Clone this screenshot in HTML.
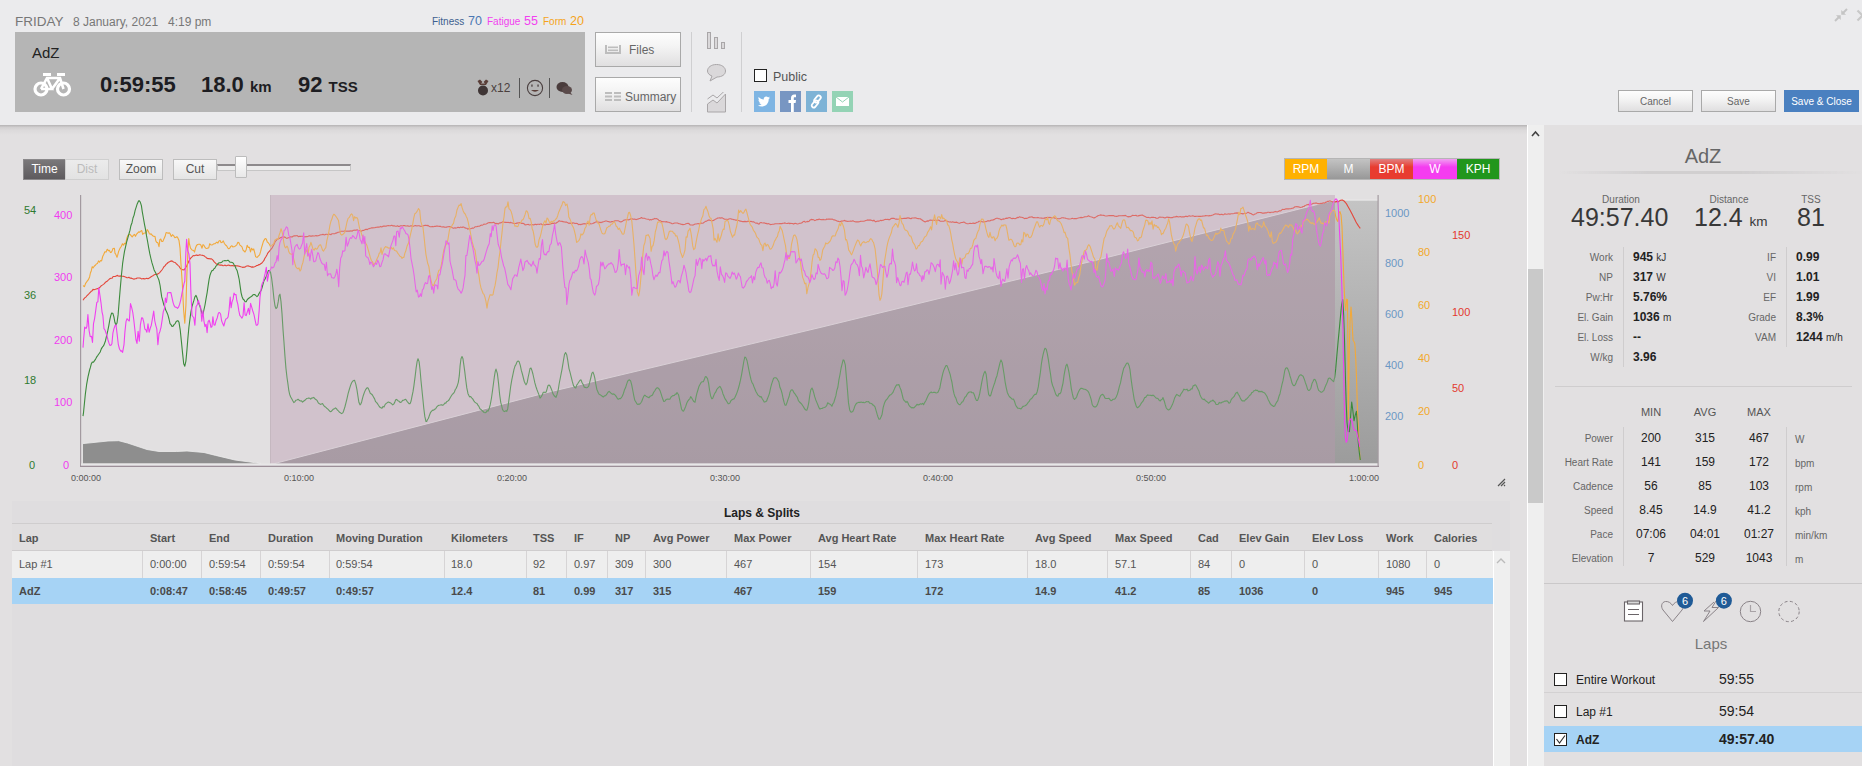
<!DOCTYPE html>
<html><head><meta charset="utf-8">
<style>
*{margin:0;padding:0;box-sizing:border-box}
html,body{width:1862px;height:766px;overflow:hidden}
body{background:#e2e0e1;font-family:"Liberation Sans",sans-serif;position:relative;color:#333}
.a{position:absolute;white-space:nowrap}
#hdr{position:absolute;left:0;top:0;width:1862px;height:125px;background:#ebebed}
#hdrsh{position:absolute;left:0;top:125px;width:1862px;height:10px;background:linear-gradient(#b5b3b4,#d2d0d1 25%,#dcdadb 55%,#e2e0e1)}
.btn{position:absolute;border:1px solid #a9a9a9;background:linear-gradient(#fdfdfd,#f4f4f4 40%,#e0dfe0);color:#666;font-size:12px;text-align:center}
.tb{position:absolute;border:1px solid #bdbdbd;background:linear-gradient(#f8f8f8,#e4e4e4);color:#555;font-size:12px;text-align:center;height:21px;line-height:19px}
.lbl{font-size:11px}
.ax{position:absolute;font-size:11px;white-space:nowrap}
.th{position:absolute;font-size:11px;font-weight:bold;color:#555;white-space:nowrap}
.td{position:absolute;font-size:11px;color:#555;white-space:nowrap}
.tdb{position:absolute;font-size:11px;color:#4a4a4a;font-weight:bold;white-space:nowrap}
.sl{position:absolute;font-size:10px;color:#666;text-align:right;white-space:nowrap}
.sv{position:absolute;font-size:12px;color:#222;font-weight:bold;white-space:nowrap}
.sv span{font-size:10px;font-weight:normal;color:#333}
.mv{position:absolute;font-size:12px;color:#222;text-align:center;width:40px;white-space:nowrap}
</style></head><body>

<div id="hdr"></div>
<div id="hdrsh"></div>

<!-- date line -->
<div class="a" style="left:15px;top:14px;font-size:13.5px;color:#777">FRIDAY</div>
<div class="a" style="left:73px;top:15px;font-size:12px;color:#777">8 January, 2021</div>
<div class="a" style="left:168px;top:15px;font-size:12px;color:#777">4:19 pm</div>
<div class="a" style="left:432px;top:16px;font-size:10px;color:#3d5f8f">Fitness</div><div class="a" style="left:468px;top:14px;font-size:12.5px;color:#4b77b3">70</div>
<div class="a" style="left:487px;top:16px;font-size:10px;color:#f23ff0">Fatigue</div><div class="a" style="left:524px;top:14px;font-size:12.5px;color:#f23ff0">55</div>
<div class="a" style="left:543px;top:16px;font-size:10px;color:#f5a31a">Form</div><div class="a" style="left:570px;top:14px;font-size:12.5px;color:#f5a31a">20</div>

<!-- gray workout box -->
<div class="a" style="left:15px;top:32px;width:570px;height:80px;background:#b5b5b5"></div>
<div class="a" style="left:32px;top:44px;font-size:15px;color:#222">AdZ</div>
<svg class="a" style="left:33px;top:72px" width="39" height="25" viewBox="0 0 39 25">
<g fill="none" stroke="#fff" stroke-width="3.2">
<circle cx="8" cy="17" r="6"/><circle cx="30.5" cy="17" r="6"/>
<path d="M8 17 L14 6 L27 6 L30.5 17 M14 6 L19 17 L8 17 M19 17 L27 6" stroke-width="2.6"/>
</g>
<rect x="10" y="1" width="8" height="3" fill="#fff"/><rect x="24" y="1" width="8" height="3" fill="#fff"/>
</svg>
<div class="a" style="left:100px;top:72px;font-size:22px;font-weight:bold;color:#1d1d22">0:59:55</div>
<div class="a" style="left:201px;top:72px;font-size:22px;font-weight:bold;color:#1d1d22">18.0 <span style="font-size:15px">km</span></div>
<div class="a" style="left:298px;top:72px;font-size:22px;font-weight:bold;color:#1d1d22">92 <span style="font-size:15px">TSS</span></div>
<svg class="a" style="left:477px;top:79px" width="12" height="18" viewBox="0 0 12 18"><path d="M0.5 2 L3 0.5 L6 3.5 L9 0.5 L11.5 2 L9 6 L3 6Z" fill="#5a3e38"/><path d="M4 4.5 L6 2.5 L8 4.5" fill="#b5b5b5"/><circle cx="6" cy="11.5" r="5" fill="#3f3535"/></svg>
<div class="a" style="left:491px;top:81px;font-size:12px;color:#4a3f3d">x12</div>
<div class="a" style="left:519px;top:78px;width:1px;height:20px;background:#555"></div>
<svg class="a" style="left:526px;top:79px" width="18" height="18" viewBox="0 0 18 18"><circle cx="9" cy="9" r="7.6" fill="none" stroke="#4a3f3f" stroke-width="1.1"/><rect x="5.3" y="5.5" width="1.3" height="2.2" fill="#4a3f3f"/><rect x="11.4" y="5.5" width="1.3" height="2.2" fill="#4a3f3f"/><path d="M5 11 Q9 14.5 13 11Z" fill="#5a3e38"/></svg>
<div class="a" style="left:549px;top:78px;width:1px;height:20px;background:#555"></div>
<svg class="a" style="left:556px;top:81px" width="17" height="15" viewBox="0 0 17 15"><ellipse cx="6.5" cy="6" rx="6" ry="5" fill="#4a3c3c"/><ellipse cx="11" cy="9" rx="5" ry="4" fill="#5a4a4a"/><path d="M14 11 L16.5 14 L12 12.5Z" fill="#5a4a4a"/></svg>

<!-- Files / Summary -->
<div class="btn" style="left:595px;top:32px;width:86px;height:35px;line-height:33px"><span style="position:absolute;left:33px;top:1px">Files</span></div>
<svg class="a" style="left:605px;top:45px" width="16" height="9" viewBox="0 0 16 9"><path d="M1 0 V8 H15 V0" fill="none" stroke="#bdbdbd" stroke-width="2"/><rect x="3" y="1.5" width="10" height="1.6" fill="#bdbdbd"/><rect x="3" y="4.5" width="10" height="1.6" fill="#bdbdbd"/></svg>
<div class="btn" style="left:595px;top:77px;width:86px;height:35px;line-height:33px"><span style="position:absolute;left:29px;top:3px">Summary</span></div>
<svg class="a" style="left:605px;top:92px" width="16" height="9" viewBox="0 0 16 9"><g fill="#bdbdbd"><rect x="0" y="0" width="7" height="2"/><rect x="9" y="0" width="7" height="2"/><rect x="0" y="3.5" width="7" height="2"/><rect x="9" y="3.5" width="7" height="2"/><rect x="0" y="7" width="7" height="2"/><rect x="9" y="7" width="7" height="2"/></g></svg>
<div class="a" style="left:691px;top:32px;width:1px;height:80px;background:#cfcfd1"></div>
<div class="a" style="left:741px;top:32px;width:1px;height:80px;background:#cfcfd1"></div>
<svg class="a" style="left:706px;top:31px" width="21" height="19" viewBox="0 0 21 19"><g fill="#dad8da" stroke="#a9a6a8" stroke-width="1"><rect x="1.5" y="1.5" width="3" height="16"/><rect x="8.5" y="6.5" width="3" height="11"/><rect x="15.5" y="11.5" width="3" height="6"/></g></svg>
<svg class="a" style="left:706px;top:63px" width="21" height="19" viewBox="0 0 21 19"><path d="M10.5 1.5 C16 1.5 19.5 4.5 19.5 8 C19.5 11.5 16 14 11 14 L4 18 L6 13 C3 12 1.5 10 1.5 8 C1.5 4.5 5 1.5 10.5 1.5Z" fill="#dad8da" stroke="#a9a6a8"/></svg>
<svg class="a" style="left:706px;top:92px" width="21" height="21" viewBox="0 0 21 21"><path d="M1.5 20 V12 L7 8 L11 11 L19.5 2 V20 Z" fill="#dad8da" stroke="#a9a6a8"/><path d="M1.5 7 L7 3 L11 6 L19.5 -2" fill="none" stroke="#a9a6a8"/></svg>

<!-- public -->
<div class="a" style="left:754px;top:69px;width:13px;height:13px;border:1.5px solid #222;background:#fff"></div>
<div class="a" style="left:773px;top:70px;font-size:12.5px;color:#555">Public</div>
<div class="a" style="left:754px;top:91px;width:21px;height:21px;background:#7fb5e3"></div>
<svg class="a" style="left:754px;top:91px" width="21" height="21" viewBox="0 0 21 21"><path d="M16 6.5 C15.5 6.8 15 6.9 14.5 7 C15 6.6 15.4 6.2 15.6 5.6 C15.1 5.9 14.6 6.1 14 6.2 C13.5 5.7 12.9 5.4 12.2 5.4 C10.8 5.4 9.7 6.5 9.7 7.9 C9.7 8.1 9.7 8.3 9.8 8.5 C7.7 8.4 5.9 7.4 4.7 5.9 C4.5 6.3 4.4 6.7 4.4 7.2 C4.4 8.1 4.8 8.8 5.5 9.3 C5.1 9.3 4.7 9.2 4.4 9 C4.4 10.2 5.3 11.2 6.4 11.4 C6 11.6 5.5 11.6 5.2 11.5 C5.5 12.5 6.5 13.2 7.6 13.3 C6.7 14 5.6 14.4 4.4 14.4 C4.2 14.4 4 14.4 3.8 14.4 C4.9 15.1 6.3 15.5 7.7 15.5 C12.2 15.5 14.7 11.7 14.7 8.4 V8.1 C15.2 7.7 15.6 7.2 16 6.5Z" fill="#fff"/></svg>
<div class="a" style="left:780px;top:91px;width:21px;height:21px;background:#7896c2"></div>
<svg class="a" style="left:780px;top:91px" width="21" height="21" viewBox="0 0 21 21"><path d="M11 21 V12 H8.5 V9 H11 V7 C11 4.8 12.3 3.5 14.3 3.5 C15 3.5 15.7 3.6 16 3.6 V6.3 H14.6 C13.8 6.3 13.8 6.8 13.8 7.3 V9 H16 L15.6 12 H13.8 V21Z" fill="#fff"/></svg>
<div class="a" style="left:806px;top:91px;width:21px;height:21px;background:#7eb3d6"></div>
<svg class="a" style="left:806px;top:91px" width="21" height="21" viewBox="0 0 21 21"><g fill="none" stroke="#fff" stroke-width="1.8"><rect x="9.5" y="4" width="4" height="8" rx="2" transform="rotate(40 11.5 8)"/><rect x="7" y="9" width="4" height="8" rx="2" transform="rotate(40 9 13)"/></g></svg>
<div class="a" style="left:832px;top:91px;width:21px;height:21px;background:#94d3b5"></div>
<svg class="a" style="left:832px;top:91px" width="21" height="21" viewBox="0 0 21 21"><rect x="4" y="6" width="13" height="9" fill="#fff"/><path d="M4 6 L10.5 11 L17 6" fill="none" stroke="#94d3b5" stroke-width="1"/></svg>

<!-- right top -->
<svg class="a" style="left:1834px;top:8px" width="14" height="14" viewBox="0 0 14 14"><g stroke="#c4c4c4" stroke-width="2" fill="#c4c4c4"><path d="M1 13 L5.5 8.5"/><path d="M13 1 L8.5 5.5"/><path d="M2.5 7.5 H6.5 V11.5Z" stroke-width="0.5"/><path d="M7.5 2.5 V6.5 H11.5Z" stroke-width="0.5"/></g></svg>
<svg class="a" style="left:1856px;top:9px" width="12" height="13" viewBox="0 0 12 13"><path d="M1.5 1.5 L11.5 11.5 M11.5 1.5 L1.5 11.5" stroke="#c8c8c8" stroke-width="2.2" fill="none"/></svg>
<div class="btn" style="left:1618px;top:90px;width:75px;height:22px;line-height:21px;font-size:10px">Cancel</div>
<div class="btn" style="left:1701px;top:90px;width:75px;height:22px;line-height:21px;font-size:10px">Save</div>
<div class="a" style="left:1784px;top:90px;width:75px;height:22px;line-height:23px;font-size:10px;background:#4a80c0;color:#fff;text-align:center">Save &amp; Close</div>

<!-- chart toolbar -->
<div class="tb" style="left:23px;top:159px;width:43px;background:linear-gradient(#7a787a,#5e5b5e);color:#fff;border-color:#8a888a">Time</div>
<div class="tb" style="left:65px;top:159px;width:44px;color:#bbb;background:linear-gradient(#ececec,#e2e2e2);border-color:#cfcfcf">Dist</div>
<div class="tb" style="left:119px;top:159px;width:44px">Zoom</div>
<div class="tb" style="left:173px;top:159px;width:44px">Cut</div>
<div class="a" style="left:217px;top:164px;width:134px;height:7px;border:1px solid #c6c6c6;border-top:2px solid #8d8a8c;background:#ececec"></div>
<div class="a" style="left:235px;top:156px;width:12px;height:22px;border:1px solid #bcbcbc;background:linear-gradient(#fff,#e8e8e8);border-radius:1px"></div>

<!-- legend -->
<div class="a" style="left:1284px;top:158px;width:216px;height:22px;border:1px solid #b5b5b5"></div>
<div class="a" style="left:1285px;top:159px;width:42px;height:20px;background:#ffb100;color:#fff;font-size:12px;text-align:center;line-height:20px">RPM</div>
<div class="a" style="left:1327px;top:159px;width:43px;height:20px;background:linear-gradient(#c3c3c3,#989898);color:#fff;font-size:12px;text-align:center;line-height:20px">M</div>
<div class="a" style="left:1370px;top:159px;width:43px;height:20px;background:linear-gradient(#e08080,#e83c30 40%);color:#fff;font-size:12px;text-align:center;line-height:20px">BPM</div>
<div class="a" style="left:1413px;top:159px;width:44px;height:20px;background:linear-gradient(#f0a0f0,#f53cf0 40%);color:#fff;font-size:12px;text-align:center;line-height:20px">W</div>
<div class="a" style="left:1457px;top:159px;width:42px;height:20px;background:#21961c;color:#fff;font-size:12px;text-align:center;line-height:20px">KPH</div>

<svg width="1862" height="766" style="position:absolute;left:0;top:0">
<defs>
<linearGradient id="grayR" x1="0" y1="0" x2="0" y2="1"><stop offset="0" stop-color="#c4c4c4"/><stop offset="1" stop-color="#9c9c9c"/></linearGradient>
<linearGradient id="tri" x1="0" y1="0" x2="0" y2="1"><stop offset="0" stop-color="#a898a2"/><stop offset="1" stop-color="#978a93"/></linearGradient>
</defs>
<rect x="270" y="195" width="1065" height="268.5" fill="#d1c2cc"/><rect x="270" y="195" width="1" height="268.5" fill="#c0b3bb"/>
<rect x="1335" y="200" width="43" height="263.5" fill="url(#grayR)"/><rect x="1335" y="199.5" width="43" height="1.2" fill="#e9e8e9"/>
<path d="M83 463.5 L83 443.6 L108 441 L118.7 440.7 L127.5 443 L147 449.5 L159 451.5 L176.5 451.5 L187 451 L204 452.5 L215.6 455.4 L235 460 L260.7 463.5 Z" fill="#8e8e8e"/><path d="M83 443.6 L108 441 L118.7 440.7 L127.5 443 L147 449.5 L159 451.5 L176.5 451.5 L187 451 L204 452.5 L215.6 455.4 L235 460 L260.7 463.5" fill="none" stroke="#eeeeee" stroke-width="0.8"/>
<path d="M274.6 463.5 L545 393 L820 327.5 L1095 260.5 L1335 200 L1335 463.5 Z" fill="url(#tri)"/>
<path d="M274.6 463.5 L545 393 L820 327.5 L1095 260.5 L1335 200" stroke="#ddd5da" stroke-width="1" fill="none"/>
<g fill="none" stroke-width="1.1" stroke-linejoin="round">
<path d="M83.0 300.2L83.7 299.2L84.7 297.9L85.8 297.1L87.1 295.5L88.4 294.3L89.6 293.0L90.5 292.2L91.3 291.2L92.2 290.7L93.0 289.4L94.1 289.7L95.4 289.3L97.0 288.7L97.7 288.5L98.6 288.6L99.4 287.5L100.3 287.0L101.3 285.7L102.3 285.1L103.4 284.4L104.4 283.6L105.5 282.2L106.6 281.6L107.7 280.7L108.8 279.7L109.9 278.6L111.0 278.3L112.1 278.2L113.1 276.5L114.1 276.5L115.0 276.4L116.1 276.2L117.1 275.3L118.1 276.0L119.1 276.1L120.1 276.1L121.1 275.9L122.0 276.3L123.0 276.3L123.9 276.4L124.9 276.8L125.9 277.1L126.9 277.7L127.9 277.8L128.9 277.3L130.0 278.1L130.9 278.1L131.9 278.4L132.9 278.8L133.9 279.2L135.0 278.7L136.0 278.7L137.1 278.0L138.2 278.0L139.2 278.0L140.3 278.1L141.4 278.9L142.4 278.8L143.4 278.6L144.4 278.9L145.4 278.7L146.3 278.4L147.2 278.4L148.0 278.7L149.3 278.1L150.4 277.2L151.5 276.6L152.4 275.9L153.4 275.4L154.3 274.7L155.1 274.5L156.0 274.3L157.0 274.5L158.0 273.8L159.0 273.2L159.9 272.3L160.9 271.2L161.9 270.0L162.9 268.5L163.9 266.8L165.0 265.9L166.0 264.4L167.1 263.5L168.1 262.5L169.1 261.9L170.1 261.4L171.1 261.1L172.0 260.9L173.1 261.7L174.1 262.3L175.2 262.5L176.2 263.7L177.2 264.5L178.2 265.6L179.2 266.4L180.2 268.2L181.1 269.1L182.1 269.6L183.0 269.7L184.1 269.9L185.0 268.7L185.9 267.3L186.8 265.8L187.7 263.8L188.6 261.8L189.6 259.8L190.7 258.1L192.0 256.8L192.8 255.9L193.7 255.6L194.6 255.7L195.6 255.3L196.6 254.9L197.6 255.4L198.7 255.2L199.7 254.7L200.8 255.0L201.9 255.2L202.9 255.4L204.0 255.8L205.0 256.6L206.0 257.3L207.0 258.3L208.0 258.6L209.1 258.5L210.1 258.9L211.2 258.8L212.2 259.4L213.2 260.4L214.2 261.9L215.3 262.9L216.3 264.0L217.2 264.5L218.2 264.5L219.2 265.0L220.1 265.1L221.0 265.0L222.1 265.1L223.1 265.8L224.1 265.5L225.1 265.1L226.0 265.7L226.9 265.6L227.8 265.2L228.8 265.0L229.8 265.6L230.9 265.7L232.0 265.5L232.9 265.6L233.8 266.0L234.8 265.7L235.7 265.5L236.7 266.0L237.7 265.8L238.8 266.3L239.8 266.4L240.8 266.8L241.9 267.0L242.9 267.5L244.0 267.0L245.0 267.2L246.0 266.3L247.0 266.0L248.1 265.9L249.1 266.2L250.2 266.6L251.3 267.1L252.4 266.9L253.5 267.1L254.6 266.7L255.6 266.2L256.7 265.5L257.7 265.5L258.7 264.6L259.7 264.6L260.7 263.8L261.6 263.3L262.7 262.0L263.8 260.7L264.9 258.3L265.9 256.7L266.9 254.9L267.8 253.1L268.8 251.9L269.7 250.8L270.7 249.7L271.6 248.7L272.6 246.9L273.5 245.2L274.3 243.7L274.9 242.2L275.5 241.1L276.2 240.6L277.0 239.5L277.9 239.1L279.2 238.5L280.9 237.6L283.0 236.8L283.7 237.2L284.4 236.9L285.1 237.3L285.9 237.9L286.7 238.4L287.5 238.0L288.4 237.7L289.3 237.7L290.2 236.9L291.1 236.9L292.1 237.0L293.1 236.2L294.1 235.8L295.1 235.9L296.1 235.7L297.2 235.6L298.3 236.6L299.4 236.3L300.4 236.4L301.5 236.2L302.7 236.3L303.8 236.6L304.9 237.0L306.0 236.5L307.1 236.7L308.2 236.3L309.4 235.8L310.5 236.1L311.6 236.1L312.7 235.9L313.8 236.0L314.8 236.0L315.9 235.6L317.0 235.9L318.0 235.8L319.0 235.4L320.0 235.0L321.0 234.7L322.0 234.8L323.0 234.2L324.0 234.9L325.0 234.8L326.0 234.3L327.0 234.3L328.0 234.8L329.0 234.1L330.0 234.2L331.0 234.7L332.0 233.7L333.0 233.8L334.0 233.7L335.0 233.6L336.0 233.1L337.0 232.9L338.0 232.2L339.0 232.1L340.0 231.8L341.0 231.3L342.0 231.3L343.0 231.3L344.0 231.2L345.0 230.8L346.0 231.2L347.0 231.0L348.0 231.3L349.0 231.0L350.0 231.1L351.0 230.8L352.0 231.3L353.0 230.4L354.0 230.3L355.0 230.1L356.0 230.2L357.0 229.8L358.0 230.3L358.9 230.6L359.9 230.8L360.8 230.9L361.7 231.1L362.7 230.4L363.6 230.5L364.5 229.9L365.5 229.4L366.4 229.4L367.3 229.6L368.2 228.8L369.1 228.7L370.1 228.3L371.0 228.1L371.9 227.7L372.9 227.9L373.8 227.7L374.8 227.7L375.7 227.4L376.7 227.2L377.7 227.1L378.7 227.1L379.7 227.0L380.7 226.4L381.7 226.9L382.7 226.4L383.8 226.1L384.9 226.0L386.0 226.3L387.1 225.7L388.2 225.6L389.4 225.8L390.6 225.6L391.8 225.3L393.0 225.9L393.9 225.8L394.7 225.9L395.6 226.2L396.6 226.2L397.5 225.7L398.5 226.5L399.5 226.4L400.5 225.8L401.5 225.8L402.5 226.0L403.5 225.6L404.6 225.5L405.7 226.0L406.7 226.0L407.8 225.9L408.9 226.2L410.0 226.1L411.1 225.7L412.3 226.1L413.4 226.2L414.5 225.8L415.6 225.6L416.8 226.0L417.9 225.7L419.0 225.8L420.2 226.1L421.3 226.3L422.4 226.2L423.5 225.8L424.7 225.4L425.8 225.2L426.9 225.6L428.0 225.4L429.1 226.3L430.2 226.8L431.2 226.8L432.3 226.4L433.3 226.8L434.4 226.4L435.4 226.4L436.4 226.0L437.4 226.1L438.4 226.2L439.3 226.4L440.3 226.3L441.2 226.8L442.1 227.0L443.0 226.7L443.8 226.9L444.6 227.1L445.4 227.2L446.2 227.0L447.0 227.1L447.7 226.8L449.4 226.6L450.9 227.0L452.3 227.8L453.6 228.2L454.9 227.8L456.0 228.1L457.0 227.7L458.0 227.2L458.9 227.6L459.7 227.6L460.5 227.1L461.3 227.2L462.1 227.5L462.8 227.0L463.6 227.0L464.3 227.5L465.1 227.9L465.9 228.1L466.8 228.2L467.7 229.1L468.7 228.8L469.7 228.8L470.6 228.7L471.5 228.4L472.4 227.9L473.3 228.2L474.2 227.6L475.0 226.8L475.8 226.7L476.7 226.7L477.5 226.4L478.4 226.2L479.3 226.3L480.2 225.8L481.1 225.1L482.0 225.2L482.9 224.9L483.9 224.1L485.0 224.2L486.0 224.0L487.1 223.4L488.3 222.7L489.5 222.6L490.8 222.6L492.1 222.8L493.5 222.2L495.0 223.2L495.8 223.8L496.6 223.4L497.4 223.6L498.3 224.0L499.1 223.3L500.1 222.8L501.0 222.9L502.0 222.3L502.9 221.8L503.9 222.0L505.0 222.4L506.0 222.4L507.1 222.5L508.1 222.3L509.2 222.7L510.3 222.4L511.4 222.7L512.5 223.0L513.7 223.5L514.8 223.5L515.9 223.4L517.1 223.1L518.2 222.9L519.4 222.5L520.5 222.8L521.7 223.4L522.8 223.4L523.9 223.6L525.1 224.9L526.2 224.8L527.3 224.5L528.4 224.4L529.5 225.0L530.6 224.8L531.6 224.5L532.7 224.8L533.7 224.9L534.7 224.4L535.7 224.4L536.7 224.6L537.7 224.3L538.6 224.2L539.5 224.4L540.4 224.1L541.2 223.8L542.0 224.6L542.8 224.8L543.6 224.5L544.3 224.7L545.0 224.9L546.9 224.3L548.5 224.4L550.0 224.2L551.2 223.6L552.4 223.4L553.4 223.4L554.3 222.9L555.1 223.2L555.9 223.2L556.6 222.7L557.3 222.2L557.9 221.9L558.6 221.1L559.4 220.8L560.2 221.2L561.0 221.3L562.0 221.4L563.0 221.6L563.9 221.9L564.8 222.0L565.6 222.1L566.5 222.0L567.4 222.6L568.2 223.0L569.1 223.5L570.0 222.9L570.9 223.5L571.9 223.5L572.9 222.8L573.9 223.0L575.0 223.5L576.1 223.4L577.3 223.5L578.6 224.7L580.0 224.3L580.8 224.7L581.6 224.3L582.4 224.1L583.3 223.9L584.1 223.6L585.0 224.1L585.9 223.7L586.9 223.6L587.8 223.2L588.8 223.5L589.8 223.0L590.7 224.0L591.7 223.8L592.8 223.4L593.8 222.9L594.8 222.6L595.9 221.9L596.9 221.8L598.0 222.0L599.0 222.2L600.1 222.4L601.2 222.6L602.3 222.1L603.3 221.8L604.4 221.5L605.5 221.0L606.6 221.0L607.7 221.5L608.7 221.6L609.8 222.1L610.9 221.9L611.9 221.6L613.0 221.5L614.0 221.4L614.9 220.7L615.9 220.7L616.9 220.8L617.9 220.7L618.9 221.1L619.9 221.7L620.9 221.9L621.9 221.4L622.9 220.9L623.9 220.1L624.9 220.0L626.0 219.8L627.0 219.7L628.0 219.8L629.0 219.9L630.1 219.1L631.1 218.9L632.1 218.8L633.1 219.2L634.2 219.0L635.2 219.3L636.2 219.6L637.3 219.2L638.3 218.9L639.3 218.5L640.4 218.2L641.4 217.5L642.4 218.3L643.5 218.2L644.5 218.3L645.5 218.7L646.5 219.0L647.6 219.2L648.6 219.2L649.6 220.1L650.6 219.5L651.6 219.9L652.6 219.3L653.7 219.1L654.7 218.4L655.7 218.8L656.7 218.6L657.7 219.2L658.7 220.2L659.7 220.7L660.7 220.8L661.7 221.9L662.7 221.5L663.8 221.8L664.8 221.7L665.8 221.9L666.8 221.6L667.8 222.2L668.8 222.3L669.8 222.7L670.8 223.1L671.8 223.6L672.8 223.7L673.9 223.3L674.9 223.0L675.9 223.0L676.9 223.0L677.9 223.1L678.9 223.7L679.9 223.8L680.9 224.2L681.9 224.4L683.0 224.6L684.0 224.5L685.0 224.2L686.0 223.8L687.0 223.5L688.0 223.4L689.0 223.6L690.1 224.9L691.1 225.0L692.1 225.0L693.1 225.1L694.1 224.5L695.2 224.0L696.2 224.0L697.2 223.8L698.2 223.6L699.2 224.0L700.3 223.5L701.3 223.1L702.3 223.3L703.3 223.0L704.4 222.1L705.4 221.4L706.4 221.3L707.4 220.6L708.4 220.0L709.5 220.1L710.5 220.5L711.5 220.7L712.5 220.7L713.5 220.4L714.6 219.8L715.6 219.1L716.6 218.7L717.6 218.0L718.6 218.0L719.7 217.9L720.7 218.1L721.7 217.7L722.7 218.1L723.7 218.7L724.7 219.3L725.7 219.3L726.7 219.2L727.8 219.5L728.8 219.0L729.8 218.8L730.8 218.7L731.8 219.2L732.8 219.3L733.8 219.7L734.8 219.8L735.8 220.3L736.8 220.1L737.8 220.4L738.8 220.5L739.8 221.1L740.8 221.1L741.8 221.5L742.8 221.6L743.8 221.6L744.9 221.4L745.9 221.6L746.9 221.8L747.9 221.1L748.9 221.5L749.9 221.5L750.9 221.3L751.9 221.8L752.9 221.9L753.9 221.9L754.9 222.6L756.0 223.3L757.0 222.9L758.0 223.8L759.0 224.1L760.0 222.7L761.0 222.5L762.0 222.8L763.0 223.0L764.1 222.8L765.1 223.4L766.1 223.3L767.2 223.9L768.2 223.5L769.3 224.0L770.4 224.6L771.4 224.5L772.5 224.2L773.5 224.3L774.6 223.9L775.6 223.8L776.7 223.8L777.7 223.8L778.8 223.8L779.8 223.6L780.9 223.5L781.9 223.6L782.9 223.3L783.9 223.2L784.9 222.9L785.9 223.3L786.9 223.5L787.9 223.4L788.9 223.0L789.8 223.7L790.7 223.3L791.7 223.5L792.6 223.5L793.4 224.1L794.3 223.6L795.2 223.4L796.0 223.5L797.3 224.0L798.5 223.7L799.7 223.3L800.8 223.3L802.0 222.8L803.1 221.7L804.2 221.3L805.2 222.1L806.3 221.8L807.3 221.4L808.3 221.6L809.2 221.2L810.2 219.9L811.2 219.4L812.1 219.6L813.0 219.6L813.9 219.9L814.8 220.6L815.7 220.3L816.6 219.6L817.4 219.6L818.3 219.6L819.1 219.0L820.0 219.5L821.2 219.6L822.2 219.7L823.2 219.4L824.1 219.8L825.0 219.7L825.9 219.8L826.7 219.0L827.5 219.3L828.4 219.1L829.2 219.1L830.1 219.1L831.0 219.3L832.0 219.0L833.1 219.6L834.3 219.9L835.6 220.2L837.0 220.9L837.8 221.4L838.6 221.3L839.4 221.7L840.2 221.8L841.1 221.1L842.0 221.1L842.9 221.0L843.8 220.7L844.8 220.4L845.7 221.2L846.7 221.1L847.7 221.5L848.7 221.2L849.7 221.2L850.7 221.1L851.8 221.2L852.8 220.7L853.9 221.3L855.0 221.7L856.0 221.9L857.1 221.7L858.2 221.9L859.3 221.7L860.4 221.4L861.4 221.3L862.5 221.2L863.6 221.3L864.7 220.9L865.8 220.5L866.8 220.2L867.9 219.9L869.0 220.2L870.0 219.9L871.0 220.2L871.9 220.4L872.9 221.0L873.9 220.2L874.8 221.2L875.8 221.9L876.8 221.3L877.8 221.0L878.8 221.1L879.8 220.8L880.7 220.3L881.7 220.6L882.7 220.3L883.7 220.1L884.7 219.5L885.7 219.4L886.7 219.5L887.8 219.4L888.8 219.6L889.8 219.6L890.8 218.8L891.8 218.2L892.8 218.4L893.8 218.3L894.8 218.8L895.8 219.1L896.9 219.1L897.9 219.2L898.9 219.0L899.9 218.5L900.9 218.4L901.9 218.7L903.0 218.5L904.0 218.4L905.0 218.4L906.0 218.4L907.0 218.1L908.0 217.8L909.0 218.1L910.0 218.4L911.0 218.8L912.0 218.0L913.1 218.0L914.1 218.0L915.1 217.8L916.1 218.0L917.2 218.5L918.2 218.6L919.2 218.7L920.3 218.7L921.3 219.5L922.4 220.3L923.4 221.0L924.4 221.6L925.5 221.9L926.5 221.2L927.5 220.9L928.5 221.1L929.5 220.2L930.6 220.1L931.6 220.2L932.6 220.4L933.5 220.1L934.5 220.2L935.5 220.3L936.5 220.3L937.4 220.5L938.4 220.1L939.3 220.3L940.3 221.3L941.2 221.3L942.1 221.3L943.0 221.2L944.1 221.1L945.2 220.6L946.3 220.7L947.4 221.4L948.5 221.7L949.6 222.0L950.6 221.9L951.7 222.3L952.7 221.7L953.7 222.3L954.7 222.4L955.7 222.4L956.7 222.1L957.7 222.7L958.7 223.1L959.7 223.2L960.6 222.8L961.6 222.5L962.6 222.5L963.5 222.1L964.5 222.3L965.4 223.0L966.4 223.4L967.3 223.7L968.2 223.8L969.2 223.5L970.1 223.2L971.1 223.5L972.0 223.5L973.1 223.1L974.1 223.4L975.2 223.4L976.2 222.7L977.2 222.2L978.2 222.0L979.1 221.2L980.1 221.2L981.1 221.4L982.0 221.7L983.0 221.9L983.9 221.9L984.9 221.6L985.8 221.7L986.8 221.3L987.8 220.8L988.8 220.9L989.8 221.0L990.9 220.3L991.9 220.1L993.0 219.9L994.1 219.6L995.3 218.7L996.5 218.2L997.7 218.3L998.6 218.7L999.5 218.8L1000.4 219.2L1001.3 219.8L1002.2 219.3L1003.1 218.9L1004.1 219.1L1005.0 218.7L1006.0 218.1L1007.0 218.4L1008.0 217.9L1009.0 217.7L1010.0 217.6L1011.0 218.3L1012.0 218.6L1013.1 218.4L1014.1 218.5L1015.1 218.7L1016.2 218.3L1017.2 217.4L1018.3 217.7L1019.3 216.8L1020.4 217.1L1021.5 217.3L1022.5 217.5L1023.6 218.0L1024.6 218.6L1025.7 218.3L1026.7 218.4L1027.8 218.0L1028.8 217.4L1029.9 217.1L1030.9 217.0L1032.0 216.8L1033.0 217.6L1034.0 217.6L1035.0 217.8L1036.0 217.7L1036.9 217.8L1037.9 217.4L1038.8 217.8L1039.8 218.0L1040.7 218.0L1041.6 218.1L1042.5 218.3L1043.5 218.2L1044.4 217.9L1045.3 218.1L1046.2 217.6L1047.1 217.6L1048.0 217.3L1049.0 217.7L1049.9 217.3L1050.8 217.7L1051.8 217.8L1052.7 217.7L1053.7 217.5L1054.6 218.1L1055.6 218.2L1056.6 218.4L1057.6 218.8L1058.6 218.7L1059.6 218.7L1060.7 218.3L1061.8 217.8L1062.8 217.7L1063.9 217.9L1065.1 218.0L1066.2 218.5L1067.4 218.7L1068.5 218.9L1069.8 219.0L1071.0 218.7L1071.9 218.4L1072.7 218.4L1073.6 218.7L1074.5 218.6L1075.4 218.5L1076.4 218.8L1077.3 218.3L1078.3 218.0L1079.2 217.7L1080.2 217.6L1081.2 217.4L1082.2 217.7L1083.3 217.3L1084.3 216.9L1085.3 216.7L1086.4 216.8L1087.4 216.5L1088.5 215.8L1089.6 216.4L1090.7 216.8L1091.7 217.0L1092.8 217.5L1093.9 217.9L1095.0 217.6L1096.1 216.9L1097.2 216.2L1098.3 215.5L1099.4 215.3L1100.5 214.9L1101.6 215.1L1102.7 215.2L1103.8 215.4L1104.8 215.7L1105.9 216.0L1107.0 216.0L1108.1 215.8L1109.2 215.6L1110.2 215.6L1111.3 215.5L1112.3 215.6L1113.4 215.5L1114.4 216.1L1115.4 216.2L1116.4 216.4L1117.4 216.2L1118.4 215.9L1119.4 215.8L1120.3 215.7L1121.3 215.8L1122.2 215.8L1123.1 215.6L1124.0 215.8L1124.9 215.4L1125.8 215.6L1126.6 216.1L1127.9 216.9L1129.1 216.6L1130.3 216.7L1131.5 216.1L1132.6 215.3L1133.8 215.5L1134.9 215.5L1136.0 215.3L1137.0 216.0L1138.1 215.9L1139.1 215.6L1140.1 215.4L1141.1 215.3L1142.1 214.9L1143.1 215.5L1144.1 216.1L1145.0 216.5L1146.0 217.0L1146.9 217.4L1147.9 217.5L1148.8 217.4L1149.7 217.7L1150.6 217.8L1151.6 217.3L1152.5 217.4L1153.4 217.2L1154.3 217.5L1155.3 217.5L1156.2 218.2L1157.1 218.2L1158.1 218.1L1159.0 217.3L1160.0 217.1L1161.0 217.2L1162.0 217.3L1163.0 217.3L1164.0 217.7L1165.0 217.9L1166.0 217.4L1167.1 217.0L1168.1 217.4L1169.1 217.4L1170.1 217.7L1171.1 217.6L1172.2 217.8L1173.2 217.1L1174.2 217.0L1175.2 216.9L1176.2 216.4L1177.3 216.6L1178.3 217.0L1179.3 216.8L1180.3 216.6L1181.4 217.1L1182.4 216.7L1183.4 216.9L1184.4 216.9L1185.4 216.2L1186.5 216.4L1187.5 216.6L1188.5 216.0L1189.5 215.8L1190.5 216.2L1191.6 216.0L1192.6 215.7L1193.6 216.0L1194.6 216.5L1195.6 216.4L1196.7 216.3L1197.7 216.3L1198.7 216.4L1199.7 216.2L1200.7 216.4L1201.7 216.2L1202.7 216.1L1203.7 216.0L1204.8 215.9L1205.8 215.6L1206.8 215.7L1207.8 215.8L1208.8 215.9L1209.8 215.6L1210.8 215.7L1211.8 215.3L1212.8 214.9L1213.8 214.4L1214.8 214.0L1215.8 213.9L1216.8 214.0L1217.8 214.1L1218.8 214.1L1219.8 214.8L1220.8 214.4L1221.9 214.4L1222.9 214.7L1223.9 214.7L1224.9 213.7L1225.9 214.2L1226.9 214.3L1227.9 214.0L1228.9 213.8L1229.9 214.3L1230.9 213.8L1231.9 213.8L1233.0 213.7L1234.0 213.5L1235.0 213.1L1236.0 213.1L1237.0 212.9L1238.0 213.1L1239.0 213.3L1240.0 213.5L1241.0 213.5L1242.0 213.6L1243.0 213.9L1244.0 213.5L1245.0 213.3L1246.0 213.5L1247.0 212.9L1248.0 212.2L1249.0 212.8L1250.0 213.4L1251.0 213.5L1252.0 214.2L1253.0 214.9L1254.0 214.6L1255.0 214.1L1256.0 213.7L1257.0 212.8L1258.0 212.6L1259.0 212.5L1260.0 212.5L1261.0 212.6L1262.0 213.1L1263.0 213.0L1264.0 213.1L1265.0 212.9L1266.0 212.9L1267.0 212.6L1268.0 212.2L1269.0 212.3L1270.0 212.7L1271.0 212.2L1272.0 212.3L1273.0 212.3L1274.0 212.1L1275.1 211.4L1276.1 211.8L1277.1 211.9L1278.2 211.5L1279.2 210.9L1280.3 210.9L1281.3 210.4L1282.4 209.4L1283.4 209.5L1284.5 209.4L1285.6 208.9L1286.6 208.9L1287.7 208.8L1288.7 208.9L1289.8 208.8L1290.8 208.7L1291.9 208.3L1292.9 208.2L1294.0 207.5L1295.0 206.8L1296.0 206.8L1297.0 206.4L1298.1 206.9L1299.1 206.9L1300.1 207.6L1301.1 207.2L1302.0 207.2L1303.0 206.5L1304.0 206.5L1304.9 205.6L1305.9 205.2L1306.8 204.8L1307.7 204.6L1308.6 204.4L1309.5 204.7L1310.7 204.4L1311.9 203.9L1313.0 203.4L1314.2 203.2L1315.4 203.1L1316.5 203.1L1317.7 203.8L1318.8 203.5L1319.9 203.8L1321.0 203.2L1322.1 203.5L1323.2 202.8L1324.3 203.1L1325.3 202.4L1326.4 202.1L1327.4 201.4L1328.3 201.4L1329.3 201.0L1330.2 200.9L1331.1 201.3L1332.0 201.6L1332.8 202.1L1333.6 201.7L1334.4 201.6L1335.1 201.9L1335.8 201.9L1336.5 201.4L1338.6 201.6L1340.1 200.4L1341.1 200.2L1341.8 200.0L1342.5 200.1L1343.1 200.4L1344.0 201.0L1345.0 202.0L1346.1 203.3L1347.1 204.9L1348.1 206.7L1349.1 208.5L1350.1 210.3L1351.0 212.0L1352.2 214.3L1353.4 216.7L1354.6 219.0L1355.6 221.2L1356.6 223.0L1358.1 225.4L1359.4 227.2L1360.3 228.4" stroke="#e4463a"/>
<path d="M83.0 286.2L83.7 285.8L84.5 286.6L85.6 283.4L86.8 281.7L88.2 279.9L89.6 276.9L90.4 273.0L91.3 270.7L92.2 266.7L93.2 267.8L94.2 266.2L95.3 265.3L96.3 264.0L97.4 263.6L98.5 260.9L99.5 262.2L100.6 260.5L101.6 260.9L102.7 256.5L103.8 254.2L104.9 251.7L106.1 252.1L107.2 249.2L108.4 250.6L109.4 250.4L110.5 252.6L111.4 252.2L112.3 250.4L113.0 248.5L114.4 248.3L115.0 253.3L115.6 253.9L117.0 257.3L117.7 255.2L118.5 251.8L119.4 249.6L120.3 247.8L121.4 246.2L122.4 243.7L123.5 245.1L124.6 243.2L125.7 243.8L126.8 238.2L127.9 235.5L129.0 234.5L130.0 234.3L131.1 235.6L132.2 237.0L133.3 235.4L134.4 234.4L135.5 236.3L136.6 234.1L137.7 233.0L138.7 231.9L139.8 232.1L140.8 231.0L141.8 230.6L142.7 234.5L143.9 233.2L145.0 233.0L146.1 233.0L147.2 229.6L148.2 231.0L149.2 233.3L150.2 234.3L151.1 233.8L152.0 235.0L153.1 236.1L154.1 236.5L155.0 236.4L155.8 240.9L156.8 242.5L157.8 242.6L159.0 246.6L159.9 239.4L160.8 239.0L161.8 241.5L162.9 241.4L163.9 238.9L165.0 236.6L166.1 232.6L167.1 232.7L168.2 233.4L169.1 232.7L170.0 233.5L171.3 236.5L172.5 234.7L173.7 235.8L174.7 237.6L175.8 237.5L176.7 236.7L177.5 237.3L179.0 240.6L180.0 247.8L181.0 264.6L182.3 283.8L183.6 309.7L184.8 323.2L185.9 305.7L186.9 274.1L188.0 249.5L188.8 238.5L189.5 244.2L190.5 248.2L192.0 250.0L192.7 250.2L193.6 250.5L194.5 252.1L195.5 248.0L196.5 245.5L197.6 244.5L198.7 244.2L199.8 244.2L200.9 245.1L202.0 248.2L203.0 244.6L204.0 245.4L204.9 247.2L205.9 248.3L206.8 248.5L207.8 248.0L208.7 248.0L209.7 243.7L210.7 244.8L211.8 245.0L212.9 244.4L214.0 243.7L214.9 243.7L215.9 242.9L216.9 242.1L217.9 243.1L219.0 241.1L220.1 240.6L221.1 242.7L222.2 242.3L223.3 240.9L224.4 243.5L225.5 245.0L226.6 245.7L227.7 247.8L228.7 248.8L229.7 248.3L230.8 246.4L231.8 245.7L232.8 246.9L233.8 246.8L234.8 246.4L235.8 245.7L236.8 244.8L237.9 242.2L238.9 242.7L239.9 245.1L240.9 245.8L242.0 246.9L243.0 250.1L244.0 251.0L245.0 252.0L246.1 250.0L247.2 245.2L248.3 247.4L249.4 247.2L250.5 251.9L251.6 248.2L252.7 250.0L253.7 249.0L254.7 252.6L255.6 256.6L256.5 257.3L257.3 257.3L258.0 256.4L259.6 254.8L260.7 251.2L261.4 248.1L262.2 245.5L263.4 241.4L264.3 239.9L265.2 238.5L266.2 239.0L267.3 242.0L268.4 242.9L269.5 244.5L270.5 246.4L271.6 245.6L272.6 244.5L273.7 244.0L274.8 240.1L275.9 239.4L277.0 238.7L278.1 239.4L279.1 235.2L280.1 232.4L281.0 228.8L282.1 232.0L283.0 236.3L283.8 242.6L284.7 246.6L285.7 247.9L287.0 246.1L287.8 247.5L288.7 251.5L289.6 253.3L290.6 254.0L291.7 254.2L292.7 253.6L293.8 259.3L294.9 263.5L295.9 267.0L297.0 268.2L298.0 268.9L299.0 267.9L300.0 271.1L300.9 269.8L301.9 265.4L302.8 262.9L303.8 258.2L304.7 253.7L305.7 251.6L306.8 249.9L307.9 256.1L309.0 247.3L309.9 245.8L310.9 242.4L311.9 245.3L313.0 249.1L314.1 250.1L315.2 248.2L316.2 249.2L317.3 248.7L318.4 246.4L319.5 245.1L320.6 244.7L321.6 247.4L322.6 250.3L323.5 251.1L324.6 249.3L325.8 247.6L326.9 240.3L327.9 236.3L328.9 231.4L329.9 225.3L330.9 221.3L331.9 219.1L332.8 216.0L333.7 214.2L334.5 214.6L335.7 216.1L336.7 217.5L337.6 218.9L338.5 220.6L339.4 226.6L340.5 234.0L341.8 235.1L342.7 234.6L343.7 233.6L344.7 232.6L345.8 227.6L347.0 222.0L348.1 218.4L349.3 217.4L350.5 215.0L351.6 213.9L352.6 215.0L353.6 220.7L354.5 216.7L355.8 218.1L356.9 217.5L357.8 219.2L358.7 224.0L359.6 228.4L360.7 231.1L362.0 235.3L362.9 237.1L363.8 240.9L364.8 241.4L365.9 243.6L367.0 245.6L368.1 249.3L369.2 253.4L370.3 257.4L371.4 260.5L372.5 261.8L373.6 264.7L374.6 263.8L375.6 262.3L376.6 259.8L377.5 257.7L378.3 256.4L379.2 253.2L380.1 252.7L381.0 247.8L382.0 254.4L383.1 250.6L384.3 248.2L385.6 246.5L386.4 247.2L387.3 247.0L388.2 248.1L389.2 247.8L390.2 248.7L391.2 247.3L392.3 249.1L393.3 247.8L394.4 250.3L395.5 250.8L396.6 251.1L397.7 253.2L398.8 254.5L399.9 256.3L401.0 256.6L402.0 258.4L403.0 257.4L403.9 257.5L404.8 253.4L405.7 251.3L407.0 246.3L408.3 243.6L409.5 238.9L410.6 233.8L411.7 229.4L412.8 223.6L413.8 217.9L414.8 213.8L415.7 213.3L416.7 211.9L417.6 210.5L418.5 208.6L419.7 210.3L420.8 221.4L421.9 225.2L423.0 227.5L424.0 236.3L425.0 246.1L425.9 254.1L426.8 258.8L427.6 263.0L428.9 266.6L429.9 274.4L430.9 279.8L431.9 284.0L433.0 285.7L433.9 285.0L434.9 281.8L435.9 280.2L436.9 278.4L437.9 273.4L438.9 270.2L440.0 270.0L441.0 266.6L442.0 261.2L442.9 255.1L443.9 249.8L445.0 246.3L446.2 244.6L447.7 240.8L448.5 235.9L449.4 230.3L450.4 227.4L451.4 227.0L452.5 224.6L453.5 223.3L454.6 218.4L455.8 216.0L456.9 210.3L458.0 207.5L459.0 205.1L460.1 205.4L461.1 203.6L462.0 207.3L463.1 210.7L464.2 213.0L465.2 214.0L466.2 216.4L467.2 218.3L468.2 222.1L469.1 226.6L470.1 230.9L471.0 235.9L472.0 241.3L473.0 244.8L474.0 248.3L475.0 250.2L476.0 257.0L477.0 264.5L478.0 270.3L479.0 276.1L480.0 283.5L481.0 287.9L482.0 290.6L483.0 293.3L484.0 294.3L485.0 297.3L486.0 301.7L487.0 308.2L488.0 301.4L489.0 298.2L490.0 294.9L491.0 294.7L492.0 295.4L493.0 294.6L494.0 289.4L495.0 285.7L496.0 279.9L497.0 272.5L498.0 267.6L499.0 258.4L500.0 251.7L501.0 241.5L502.0 232.8L503.0 223.0L504.0 217.1L505.0 208.4L506.0 206.8L507.0 206.9L508.0 201.9L509.0 208.8L510.0 209.5L511.0 211.2L512.0 214.5L513.0 218.9L514.0 223.1L515.0 226.4L516.0 225.8L517.0 226.7L518.0 226.3L519.0 223.2L520.1 223.3L521.1 221.7L522.1 219.9L523.1 219.6L524.1 217.2L525.1 214.4L526.1 210.8L527.1 211.2L528.0 213.3L529.1 218.7L530.2 218.4L531.2 222.1L532.2 228.7L533.2 231.3L534.1 236.2L535.1 244.0L536.1 246.7L537.0 247.4L538.0 246.1L539.0 239.9L540.0 237.3L541.0 233.6L541.9 229.4L542.9 225.2L543.9 222.5L545.0 220.7L546.0 223.4L547.0 218.0L548.0 219.0L549.1 221.5L550.1 223.4L551.2 221.2L552.3 222.3L553.5 220.9L554.6 220.7L555.6 219.3L556.6 218.5L557.7 215.7L558.7 212.2L559.8 209.7L560.9 207.1L562.0 204.7L563.0 201.6L563.9 202.0L564.8 202.9L565.6 205.6L567.0 204.0L568.0 208.7L568.8 217.0L569.8 218.8L571.0 221.6L571.8 224.8L572.7 226.3L573.6 227.9L574.5 231.4L575.5 235.5L576.6 242.4L577.7 241.7L578.8 240.7L580.0 238.3L580.9 233.8L581.8 235.0L582.8 234.2L583.8 232.6L584.9 228.5L586.0 226.8L587.0 222.6L588.1 221.0L589.2 225.3L590.2 216.7L591.2 214.6L592.1 214.6L593.0 213.1L594.2 213.0L595.2 216.9L596.2 220.3L597.2 221.0L598.1 223.6L599.0 223.5L599.9 226.9L600.9 230.1L602.0 233.1L602.9 233.7L603.9 234.0L604.9 233.5L605.9 230.5L606.9 227.8L607.9 227.1L608.9 226.2L609.9 226.3L611.0 224.2L612.0 224.2L613.0 222.9L614.0 221.7L615.1 222.9L616.1 226.0L617.2 227.0L618.3 229.5L619.4 228.2L620.4 230.5L621.4 231.9L622.3 233.9L623.2 234.3L624.0 233.6L625.5 226.5L626.6 220.7L627.6 216.9L628.5 212.8L629.5 212.3L630.6 215.5L631.8 221.1L632.9 232.2L634.0 244.9L635.0 258.9L636.2 276.5L637.3 291.9L638.7 296.0L639.6 291.1L640.5 282.4L641.6 269.0L642.7 256.2L643.8 245.7L644.9 242.6L646.0 235.3L647.0 235.4L648.1 234.6L649.1 236.3L650.1 238.6L651.1 251.3L652.1 246.3L653.0 245.8L654.2 240.4L655.3 232.0L656.4 228.2L657.6 222.0L658.8 222.1L659.8 221.6L660.8 222.5L661.9 223.2L663.0 227.8L664.0 233.1L665.0 238.3L666.0 239.6L667.1 238.5L668.1 235.6L669.1 232.0L670.2 231.0L671.6 231.2L672.5 231.2L673.5 233.1L674.6 233.3L675.7 236.1L676.9 235.7L678.1 239.9L679.3 244.6L680.5 252.2L681.5 254.5L682.5 257.5L683.8 254.4L685.0 250.0L686.1 236.9L687.1 237.3L688.1 231.2L689.1 229.9L690.0 228.2L691.1 233.6L691.9 239.2L692.7 245.9L693.7 249.7L695.0 248.3L695.8 243.6L696.6 239.4L697.6 234.3L698.6 230.5L699.6 225.0L700.7 221.7L701.7 218.2L702.8 216.1L703.9 209.6L705.0 208.6L706.0 206.3L707.0 209.6L708.0 211.8L709.1 216.0L710.1 218.1L711.1 218.3L712.1 223.3L713.1 228.3L714.1 240.1L715.1 238.4L716.1 240.4L717.0 242.2L718.1 233.9L719.2 241.1L720.2 238.5L721.2 235.8L722.2 231.6L723.2 229.1L724.1 229.5L725.1 221.3L726.0 221.0L727.2 220.0L728.2 221.4L729.3 225.4L730.4 231.5L731.4 234.2L732.5 237.3L733.7 234.9L734.6 235.2L735.6 230.1L736.6 226.5L737.5 221.6L738.6 210.0L739.6 212.6L740.7 210.6L741.8 212.1L743.0 213.5L743.9 212.4L744.9 210.3L745.9 209.2L746.9 212.5L747.9 216.4L749.0 220.4L750.1 224.2L751.1 225.7L752.2 227.0L753.4 230.3L754.5 231.6L755.6 233.5L756.6 236.7L757.6 237.9L758.6 238.6L759.7 241.9L760.7 244.4L761.8 245.2L762.9 250.7L764.0 244.1L765.0 243.0L766.1 246.2L767.1 244.4L768.1 245.0L769.1 247.1L770.0 249.1L771.1 249.0L772.3 247.3L773.3 245.1L774.4 241.3L775.4 239.9L776.4 237.7L777.4 236.7L778.3 232.7L779.3 230.7L780.1 226.3L781.0 228.2L782.3 230.8L783.4 236.0L784.5 241.4L785.5 245.6L786.5 253.6L787.5 256.3L788.5 258.3L789.5 258.4L790.5 252.8L791.5 244.3L792.6 239.6L793.6 235.4L794.8 234.9L796.0 236.7L797.0 239.8L798.0 246.2L799.1 255.1L800.3 261.2L801.4 269.4L802.6 277.2L803.7 279.9L804.8 283.8L805.9 283.1L806.8 293.7L808.0 287.4L809.2 283.4L810.2 278.9L811.2 270.2L812.1 261.5L813.1 255.2L814.0 254.2L815.1 248.7L816.2 249.8L817.2 251.7L818.2 257.4L819.1 257.4L820.0 260.5L821.0 259.2L821.8 255.4L822.7 250.1L824.0 247.6L824.8 246.2L825.7 242.9L826.7 243.7L827.7 243.6L828.8 242.5L829.9 241.4L831.0 239.2L832.0 236.5L833.0 235.7L834.1 236.0L835.2 235.9L836.3 232.5L837.3 230.6L838.4 228.0L839.4 223.7L840.6 225.7L841.5 222.2L842.5 223.9L843.5 226.7L844.5 230.4L845.6 240.0L846.6 239.6L847.6 243.3L848.7 250.2L849.7 251.3L850.7 253.5L851.6 254.8L852.6 252.4L853.5 250.1L854.4 247.4L855.4 244.9L856.5 242.3L857.6 240.0L858.9 241.2L859.8 243.9L860.8 245.9L861.8 243.3L862.9 242.2L864.0 241.6L865.2 242.8L866.4 242.4L867.5 241.6L868.7 241.8L869.8 239.7L870.8 238.6L871.8 239.4L872.7 241.5L873.5 242.4L875.1 248.9L876.3 260.0L877.3 270.0L878.2 283.9L879.0 294.7L880.0 300.4L880.9 298.3L881.8 294.1L882.6 284.6L883.5 273.0L884.6 260.9L886.0 252.5L886.8 247.4L887.6 243.3L888.5 240.1L889.4 237.4L890.4 235.1L891.4 232.5L892.5 227.3L893.6 226.3L894.6 224.6L895.7 223.5L896.8 224.8L897.9 227.4L899.0 223.1L900.0 215.6L901.0 220.0L902.1 223.4L903.2 224.7L904.3 228.5L905.4 230.3L906.5 230.3L907.6 231.3L908.7 234.3L909.7 235.9L910.8 236.0L911.8 238.6L912.8 242.1L913.7 243.4L914.9 245.3L916.1 249.2L917.2 248.1L918.3 245.6L919.4 245.6L920.4 243.0L921.4 241.7L922.5 241.2L923.5 239.2L924.6 236.9L925.6 236.5L926.6 235.3L927.6 232.4L928.6 230.9L929.6 229.2L930.6 226.7L931.6 229.9L932.6 221.4L933.6 219.6L934.6 214.8L935.6 220.7L936.6 224.5L937.6 217.3L938.7 216.7L939.7 216.9L940.7 218.8L941.7 214.6L942.7 218.7L943.7 218.0L944.7 219.2L945.7 219.8L946.6 220.5L947.7 225.0L948.7 225.3L949.8 229.1L950.8 233.8L951.7 239.6L952.7 243.8L953.7 250.0L954.7 254.8L955.7 258.7L956.7 260.7L957.7 262.2L958.7 267.1L959.7 257.7L960.8 258.6L961.8 264.1L962.8 258.5L963.9 258.3L965.0 257.4L966.0 254.3L967.1 253.6L968.2 253.8L969.4 251.6L970.5 248.2L971.7 248.2L972.8 244.7L973.8 240.3L974.9 238.8L975.8 238.4L977.0 234.0L978.0 231.4L978.9 230.0L979.8 225.1L980.8 220.8L981.8 218.9L983.0 219.3L983.9 220.9L984.8 223.7L985.8 228.3L986.8 232.2L987.9 236.0L988.9 237.4L990.0 232.3L991.0 236.7L992.1 238.2L993.1 236.9L994.0 237.0L995.1 240.8L996.1 238.6L997.1 238.0L998.0 236.1L999.0 231.1L999.9 228.4L1000.9 226.8L1001.9 225.0L1003.0 226.2L1003.9 224.9L1004.9 225.0L1005.8 225.0L1006.8 228.9L1007.8 234.7L1008.8 240.1L1009.8 239.9L1010.8 239.1L1011.9 239.9L1012.9 242.2L1014.0 245.5L1014.9 246.7L1015.9 246.4L1016.8 243.2L1017.8 243.1L1018.8 243.2L1019.8 245.0L1020.8 244.6L1021.8 239.7L1022.8 242.0L1023.8 232.3L1024.9 233.4L1025.9 236.8L1027.0 234.0L1028.0 234.7L1029.0 237.4L1030.1 237.6L1031.2 236.7L1032.2 234.5L1033.3 230.7L1034.4 227.7L1035.5 224.7L1036.6 221.9L1037.6 221.9L1038.7 225.2L1039.7 227.3L1040.7 225.5L1041.6 225.5L1042.7 226.3L1043.8 224.3L1044.8 220.2L1045.8 219.1L1046.8 219.9L1047.7 217.4L1048.6 222.9L1049.6 224.4L1050.6 219.8L1051.6 218.5L1052.6 217.8L1053.6 216.7L1054.6 215.8L1055.7 216.7L1056.8 219.7L1057.9 220.9L1059.0 221.1L1060.1 222.2L1061.2 223.8L1062.2 226.4L1063.2 229.1L1064.1 232.7L1065.0 232.2L1066.4 237.2L1067.7 238.4L1068.9 248.3L1070.0 255.2L1071.0 264.8L1071.9 271.4L1072.7 274.7L1073.9 281.3L1074.6 285.2L1076.0 282.7L1076.8 282.8L1077.7 282.2L1078.7 277.9L1079.8 274.5L1080.9 266.7L1082.1 260.1L1083.3 255.2L1084.4 250.7L1085.5 250.2L1086.6 249.6L1087.8 246.0L1088.9 244.7L1090.1 246.4L1091.3 250.0L1092.4 253.3L1093.4 256.9L1094.3 258.3L1095.0 259.9L1095.9 269.6L1097.0 270.2L1097.6 266.3L1098.3 262.3L1099.1 260.7L1100.0 258.6L1101.0 256.4L1102.0 250.6L1103.1 244.1L1104.2 238.2L1105.4 236.2L1106.7 231.3L1108.0 229.1L1108.9 227.9L1109.8 225.7L1110.7 226.0L1111.8 225.6L1112.8 227.9L1113.9 229.1L1115.0 228.1L1116.2 225.1L1117.3 222.7L1118.4 225.8L1119.6 227.0L1120.7 228.3L1121.8 224.0L1122.8 220.4L1123.9 219.6L1124.8 220.4L1125.7 224.1L1126.6 227.8L1128.0 227.2L1129.2 228.6L1130.4 230.6L1131.4 230.6L1132.4 231.0L1133.4 232.3L1134.4 236.9L1135.3 237.6L1136.4 238.1L1137.5 240.9L1138.5 240.3L1139.5 237.6L1140.5 237.8L1141.5 236.6L1142.6 231.4L1143.6 228.5L1144.7 225.1L1145.7 220.4L1146.8 220.1L1147.9 221.0L1148.9 224.8L1150.0 222.6L1151.0 224.5L1152.0 220.9L1153.1 229.1L1154.2 224.3L1155.3 226.1L1156.4 225.6L1157.5 227.4L1158.5 227.1L1159.5 229.4L1160.5 230.5L1161.4 234.7L1162.2 233.6L1163.0 233.8L1164.6 230.0L1165.8 228.2L1166.7 225.3L1167.6 223.6L1168.6 218.8L1169.6 222.1L1170.4 227.9L1171.3 234.4L1172.4 239.3L1174.0 244.1L1174.8 244.7L1175.7 251.1L1176.6 247.1L1177.7 243.9L1178.8 242.9L1180.0 240.9L1181.1 239.8L1182.2 237.7L1183.3 235.1L1184.4 231.2L1185.4 226.8L1186.2 224.1L1187.0 224.3L1188.5 226.4L1189.4 232.1L1190.2 235.8L1191.0 239.6L1192.0 241.5L1192.9 237.7L1193.9 234.2L1194.9 228.3L1196.0 224.9L1197.2 220.9L1198.4 219.1L1199.7 218.7L1200.6 220.4L1201.5 220.0L1202.5 224.0L1203.5 227.9L1204.5 228.1L1205.5 231.8L1206.6 235.7L1207.6 235.0L1208.7 237.8L1209.7 238.9L1210.7 240.1L1211.7 240.5L1212.8 240.1L1213.8 238.0L1214.9 235.1L1215.9 233.0L1217.0 234.4L1218.0 233.4L1219.0 233.0L1219.9 232.8L1220.8 228.1L1221.7 230.5L1222.9 230.2L1223.9 230.6L1224.8 235.0L1225.7 237.6L1226.6 241.1L1227.7 242.2L1229.0 244.1L1229.9 242.8L1230.9 238.7L1231.9 238.5L1233.0 234.4L1234.1 232.6L1235.3 229.9L1236.4 224.7L1237.6 218.7L1238.7 212.4L1239.8 214.8L1240.8 208.6L1241.8 208.4L1243.0 207.2L1244.0 210.3L1244.9 213.3L1245.8 215.7L1246.7 218.3L1247.7 221.5L1248.7 231.1L1249.8 225.8L1251.0 229.6L1251.9 229.0L1252.8 228.4L1253.8 229.1L1254.9 229.7L1256.0 223.8L1257.1 222.9L1258.2 224.6L1259.3 225.3L1260.4 225.8L1261.5 227.5L1262.6 226.3L1263.7 221.7L1264.7 225.7L1265.6 226.5L1266.8 228.3L1268.0 230.9L1269.1 234.5L1270.2 237.3L1271.3 231.9L1272.3 241.3L1273.3 243.4L1274.4 242.7L1275.4 242.5L1276.5 241.2L1277.5 238.8L1278.5 235.4L1279.5 233.1L1280.5 233.4L1281.5 232.1L1282.5 230.2L1283.5 228.4L1284.5 226.7L1285.5 225.1L1286.5 225.4L1287.5 225.9L1288.5 227.4L1289.5 224.9L1290.5 225.0L1291.5 225.1L1292.5 226.8L1293.5 228.3L1294.5 231.1L1295.5 229.9L1296.5 232.9L1297.5 233.8L1298.5 232.2L1299.5 230.9L1300.5 227.9L1301.4 225.3L1302.4 226.3L1303.3 221.8L1304.3 221.1L1305.2 220.0L1306.2 219.8L1307.3 219.1L1308.4 220.3L1309.5 222.0L1310.4 222.5L1311.4 223.5L1312.5 222.6L1313.6 223.8L1314.7 224.6L1315.8 223.1L1317.0 222.0L1318.1 220.4L1319.2 217.7L1320.3 221.3L1321.3 223.4L1322.3 222.9L1323.2 224.0L1324.0 223.4L1325.4 222.2L1326.7 221.4L1327.8 220.9L1328.8 223.1L1329.7 215.6L1330.5 213.1L1331.4 211.7L1332.6 210.6L1333.7 210.2L1334.7 210.9L1335.6 215.8L1336.5 219.2L1337.8 221.5L1339.0 212.8L1340.0 211.7L1341.1 215.2L1342.0 226.5L1343.0 255.1L1344.0 285.0L1344.9 302.1L1345.7 310.5L1346.7 299.1L1347.5 299.6L1348.0 363.7L1348.3 420.0L1348.7 393.5L1349.3 347.0L1350.1 320.4L1351.0 307.0L1352.0 320.8L1353.0 340.0L1353.9 341.5L1354.8 343.4L1355.8 360.0L1356.6 380.0L1357.0 394.7L1357.5 411.0L1358.8 437.4L1360.0 460.0" stroke="#f2a93a"/>
<path d="M83.0 416.1L83.6 411.8L84.4 403.5L85.4 393.6L86.6 384.7L88.0 376.8L89.6 370.0L90.4 367.4L91.3 363.8L92.3 362.1L93.3 362.3L94.4 360.8L95.6 359.1L96.7 356.9L97.9 355.3L99.0 353.7L100.2 352.0L101.2 349.1L102.2 347.4L103.2 346.1L104.0 344.9L105.5 340.7L106.7 335.3L107.8 330.7L108.9 325.1L109.8 319.8L110.7 315.8L111.6 313.1L112.8 313.2L113.9 316.9L114.9 322.3L115.9 325.0L117.0 323.0L118.1 314.9L119.1 302.4L120.2 289.0L121.4 275.5L122.6 263.7L123.5 257.5L124.5 251.4L125.6 246.7L126.6 242.2L127.7 238.3L128.8 234.4L130.0 230.2L130.9 225.7L132.0 222.7L133.0 218.0L134.1 215.1L135.2 210.1L136.2 207.1L137.2 203.9L138.1 201.9L139.0 200.5L140.3 202.1L141.4 205.7L142.3 211.8L143.3 217.5L144.5 224.3L145.5 229.4L146.5 235.7L147.6 241.5L148.7 247.8L149.8 253.7L150.9 258.5L152.0 262.9L153.1 266.3L154.1 269.9L155.2 272.0L156.2 274.1L157.2 276.1L158.2 278.4L159.0 280.3L160.1 285.5L160.9 291.3L161.7 296.9L163.0 301.7L163.8 304.8L164.7 306.7L165.7 310.1L166.8 312.2L167.9 314.9L169.0 319.0L170.0 323.7L171.1 324.9L172.0 326.4L173.1 326.2L174.2 324.4L175.2 323.6L176.2 321.4L177.1 320.9L178.1 320.7L179.0 322.3L180.2 329.8L181.4 341.4L182.6 353.4L183.7 363.8L184.8 366.2L185.9 361.1L186.9 350.4L187.9 338.0L188.9 327.2L190.0 318.6L190.9 312.2L191.9 306.9L192.9 303.6L193.9 300.4L194.9 296.9L196.0 295.4L196.9 297.5L197.9 300.8L198.9 303.8L199.9 306.2L201.0 310.0L202.0 313.7L203.0 314.2L204.0 309.5L205.0 305.0L206.1 298.4L207.1 292.8L208.1 285.9L209.1 279.3L210.0 275.2L211.0 272.4L212.0 270.6L212.9 270.5L213.8 268.9L214.8 268.2L216.0 266.1L216.9 265.4L217.8 263.7L218.7 263.0L219.7 262.7L220.7 262.6L221.7 262.3L222.8 261.0L223.9 260.8L225.0 260.5L225.9 260.8L226.9 260.6L228.0 260.2L229.0 261.2L230.1 262.3L231.2 262.2L232.2 262.5L233.2 263.1L234.2 265.0L235.1 266.2L236.0 268.5L237.2 270.8L238.3 275.3L239.2 279.5L240.2 286.7L241.1 292.8L242.0 296.5L243.0 299.0L244.1 300.0L245.1 301.7L246.2 301.7L247.3 299.6L248.4 298.5L249.5 297.7L250.6 296.9L251.7 296.3L252.7 295.1L253.8 294.6L254.9 294.5L255.9 295.6L257.0 296.6L258.0 295.7L259.0 293.6L260.1 291.9L261.1 290.5L262.1 287.5L263.1 283.9L264.1 280.4L265.0 279.2L266.2 276.4L267.3 273.4L268.4 270.5L269.4 270.5L270.5 272.2L271.6 278.0L272.8 287.6L273.9 298.3L275.0 306.0L276.0 308.6L277.1 307.3L278.2 301.9L279.1 295.6L280.0 294.2L281.0 301.6L282.0 313.6L283.0 329.4L283.9 341.2L284.9 355.4L285.9 367.9L287.0 377.5L287.9 383.6L288.7 389.8L289.6 394.2L290.7 397.0L292.0 399.2L292.8 400.8L293.8 402.6L294.8 401.9L295.8 400.3L296.9 399.9L298.1 399.2L299.2 400.3L300.4 401.0L301.5 400.9L302.5 402.1L303.5 401.3L304.5 400.5L305.5 399.8L306.6 398.5L307.7 398.3L308.7 398.0L309.7 398.2L310.7 399.1L311.6 398.1L312.5 397.9L313.7 397.4L314.6 398.4L315.4 399.3L316.2 399.7L317.2 400.7L318.4 403.0L320.0 404.1L320.8 404.4L321.6 403.9L322.5 403.5L323.5 405.1L324.5 406.5L325.6 407.1L326.7 408.2L327.9 409.1L329.0 410.3L330.2 411.6L331.3 411.4L332.4 410.1L333.5 409.0L334.5 408.7L335.5 407.9L336.4 408.7L337.3 409.9L338.0 410.5L339.6 412.3L340.7 412.9L341.6 413.6L342.4 413.1L343.1 412.4L344.0 409.8L345.0 406.5L346.0 402.6L347.0 398.6L348.1 393.6L349.3 389.5L350.4 385.9L351.5 383.0L352.6 381.3L353.6 380.6L354.5 380.2L355.8 384.2L356.9 389.4L357.9 396.0L358.9 402.3L360.0 404.9L360.9 403.9L361.7 401.7L362.5 398.3L363.4 395.2L364.4 392.4L365.6 389.6L367.0 387.9L367.8 387.7L368.6 389.1L369.5 391.3L370.4 393.6L371.4 394.0L372.4 395.0L373.5 397.0L374.6 398.9L375.6 401.7L376.7 402.7L377.8 404.2L378.9 405.8L380.0 407.3L381.0 407.9L382.0 408.2L383.1 406.4L384.1 406.9L385.2 404.4L386.3 403.4L387.4 402.6L388.5 402.0L389.6 402.4L390.6 402.9L391.7 403.9L392.7 404.9L393.7 404.1L394.7 402.4L395.7 399.7L396.6 399.4L397.9 400.7L399.1 401.3L400.3 402.5L401.5 402.0L402.6 400.4L403.7 400.3L404.7 399.6L405.7 399.3L406.6 400.6L407.5 401.8L409.0 403.6L410.1 403.6L411.1 401.0L412.0 396.4L413.0 391.7L414.0 385.1L415.1 376.6L416.1 368.2L417.1 361.7L418.0 358.7L419.1 361.6L420.1 370.2L421.0 380.8L422.0 390.5L422.9 399.2L423.8 408.4L424.8 416.4L426.0 421.5L426.8 421.4L427.6 419.4L428.4 418.5L429.3 415.7L430.4 412.7L431.6 411.2L433.0 410.0L433.8 410.1L434.7 409.2L435.7 408.7L436.8 406.8L437.9 405.8L439.0 405.2L440.2 405.0L441.4 404.7L442.5 405.3L443.7 404.7L444.8 403.0L445.8 403.1L446.8 401.5L447.7 401.2L449.0 400.0L450.2 397.7L451.4 395.7L452.4 394.3L453.5 393.4L454.4 392.0L455.3 389.5L456.2 388.3L457.0 386.6L458.3 382.3L459.3 375.7L460.1 365.6L461.0 358.8L462.0 356.6L462.9 358.4L463.8 364.7L464.8 371.9L465.7 379.5L466.8 387.9L468.0 393.7L468.9 395.6L469.8 397.0L470.7 396.5L471.7 397.8L472.7 398.9L473.7 400.6L474.8 402.1L475.9 402.9L477.0 403.4L477.9 405.2L478.9 406.4L479.9 408.8L481.0 409.4L482.0 410.5L483.1 411.5L484.1 412.5L485.2 412.7L486.2 412.2L487.1 410.6L488.0 411.2L489.2 408.5L490.3 404.4L491.4 398.5L492.4 391.5L493.4 384.0L494.3 377.2L495.2 371.7L496.0 369.1L497.4 373.7L498.5 382.9L499.6 394.3L500.7 402.2L501.6 405.7L502.5 409.3L503.4 411.1L504.6 411.6L506.0 410.6L506.8 411.3L507.7 408.9L508.6 402.4L509.7 394.1L510.7 386.3L511.8 379.8L512.9 374.6L514.0 369.3L515.0 366.1L516.1 364.2L517.0 361.9L518.1 361.0L519.2 361.8L520.3 365.4L521.4 370.7L522.4 374.0L523.4 378.0L524.3 381.5L525.2 383.5L526.0 384.8L527.2 382.4L528.2 377.0L529.1 373.0L530.0 368.5L531.0 368.0L531.9 370.4L532.9 374.0L533.8 378.0L534.8 382.7L535.9 386.5L537.0 389.7L537.9 392.1L539.0 394.9L540.0 398.2L541.1 396.9L542.2 395.0L543.2 392.5L544.2 392.1L545.0 392.6L546.2 391.9L547.1 388.8L547.9 385.8L549.0 385.0L549.9 385.7L550.8 387.8L551.8 390.1L552.9 393.6L554.0 395.5L555.0 396.5L556.0 397.3L557.1 394.2L558.2 390.0L559.2 383.5L560.2 378.5L561.2 373.3L562.0 369.3L563.4 360.9L564.5 354.5L565.6 352.5L566.7 354.7L567.7 360.2L569.0 368.6L570.0 372.1L571.1 376.7L572.3 381.4L573.5 385.6L574.7 387.4L575.8 388.0L576.7 385.1L577.7 383.8L578.8 382.0L580.0 380.2L581.0 379.9L582.0 382.5L583.2 384.5L584.3 387.2L585.4 387.4L586.5 387.8L587.5 387.5L588.7 386.1L589.8 381.9L590.9 377.5L591.9 373.1L593.0 372.1L594.0 374.9L594.8 378.2L595.7 383.7L596.8 389.2L598.5 393.2L599.3 394.5L600.2 394.8L601.1 395.4L602.2 396.2L603.3 397.0L604.5 395.8L605.6 395.8L606.8 394.1L608.0 392.2L609.1 391.4L610.2 392.4L611.2 393.3L612.2 394.2L613.0 393.9L614.4 394.3L615.6 395.6L616.6 397.1L617.5 398.7L618.4 399.2L619.3 398.6L620.4 398.7L621.3 397.6L622.3 396.2L623.4 393.5L624.4 390.1L625.5 387.8L626.5 384.6L627.6 381.3L628.5 380.2L629.5 379.9L630.6 380.9L631.7 384.8L632.7 390.0L633.8 395.8L634.8 400.3L635.9 402.0L637.0 403.9L637.9 404.5L638.8 404.0L639.7 404.2L640.7 403.0L641.7 401.5L642.7 398.8L643.7 396.4L644.8 395.1L646.0 396.2L647.0 396.7L648.0 397.4L649.1 397.6L650.2 396.1L651.3 395.8L652.5 395.0L653.7 392.3L654.8 390.7L655.9 388.9L656.9 387.9L657.9 387.8L658.8 388.6L660.1 390.8L661.2 394.1L662.1 397.1L662.9 399.2L663.8 401.5L664.8 401.3L666.0 399.6L666.9 399.2L667.8 399.1L668.9 399.3L670.0 399.1L671.1 397.0L672.2 396.1L673.2 395.6L674.3 395.5L675.3 394.1L676.2 394.2L677.0 392.5L678.5 394.7L679.6 399.6L680.6 404.3L681.5 408.9L682.5 410.8L683.6 411.1L684.6 408.9L685.7 406.4L686.8 403.0L688.0 400.8L688.9 399.6L689.8 398.8L690.7 396.6L691.6 397.8L692.7 399.8L693.8 401.6L695.0 402.3L695.9 397.7L696.8 393.6L697.9 390.0L698.9 386.6L700.0 384.5L701.1 382.4L702.2 381.7L703.3 381.8L704.3 379.6L705.2 377.0L706.0 376.5L707.5 378.6L708.6 383.3L709.6 390.5L710.6 395.9L711.8 398.7L712.7 398.4L713.7 395.7L714.7 393.4L715.7 392.2L716.8 389.5L717.9 388.1L719.0 387.1L719.9 386.3L720.9 388.1L721.9 390.2L722.9 393.7L723.9 396.0L724.9 398.6L726.0 400.1L727.0 401.8L728.0 403.6L729.0 403.7L730.0 402.8L731.0 400.6L732.0 399.8L733.0 399.1L734.0 398.9L735.0 397.2L736.0 395.1L737.0 392.6L738.1 389.3L739.3 385.0L740.4 380.4L741.6 374.6L742.7 368.2L743.8 361.5L744.8 357.0L745.8 357.6L747.0 360.5L748.0 365.4L749.0 370.5L750.0 375.3L751.0 379.7L752.0 382.7L753.0 384.0L753.9 386.6L754.9 389.0L755.9 391.5L756.9 393.2L758.0 395.1L759.0 395.9L760.0 396.9L761.1 396.6L762.1 398.5L763.2 400.2L764.3 402.1L765.4 401.7L766.6 401.0L767.5 398.5L768.5 396.1L769.5 393.1L770.5 388.3L771.6 384.2L772.6 381.1L773.6 378.2L774.7 377.7L775.7 377.7L776.7 378.2L777.8 380.0L778.9 382.0L779.9 387.3L781.0 389.7L782.1 393.5L783.1 398.5L784.1 402.4L785.0 405.2L786.1 405.1L787.2 402.0L788.1 399.1L789.1 396.5L790.0 392.3L791.0 390.3L792.0 389.7L793.0 390.7L794.1 392.9L795.2 394.2L796.3 395.9L797.4 397.5L798.4 400.7L799.5 402.0L800.6 403.0L801.7 404.1L802.8 405.7L803.8 407.4L804.9 409.2L805.9 410.0L806.8 410.3L807.9 407.0L808.9 401.8L809.8 395.1L810.8 389.9L812.0 388.0L812.9 390.0L813.8 393.2L814.7 396.7L815.7 399.7L816.8 402.4L817.8 404.8L818.9 407.6L820.0 409.1L821.0 408.5L822.1 408.5L823.2 407.8L824.4 407.4L825.5 407.0L826.7 405.6L827.7 402.8L828.7 403.4L829.6 403.9L830.9 404.9L831.9 406.3L832.8 403.9L833.8 402.5L835.0 398.5L835.9 395.7L836.8 390.6L837.9 387.0L838.9 379.9L840.0 374.5L841.1 368.0L842.2 363.6L843.1 359.9L844.0 360.3L845.3 364.9L846.4 377.3L847.5 390.3L848.5 402.9L849.7 409.9L850.7 412.0L851.7 412.1L852.8 411.5L853.9 409.0L855.0 405.7L856.0 404.0L857.0 403.0L858.1 402.6L859.1 402.2L860.0 402.6L861.1 402.1L862.5 402.6L863.3 402.3L864.2 402.8L865.3 402.4L866.3 401.6L867.4 401.7L868.6 401.6L869.7 403.3L870.7 403.3L871.8 403.7L872.7 404.9L873.5 405.1L875.0 406.9L876.1 410.7L877.1 414.2L878.0 417.0L879.0 419.3L880.1 418.9L881.1 416.8L882.1 414.2L883.2 407.4L884.4 403.3L885.4 401.1L886.4 399.6L887.4 398.8L888.5 396.8L889.6 395.3L890.7 394.7L891.7 393.9L892.8 392.7L893.8 390.4L894.8 388.1L895.8 386.2L896.9 384.7L898.0 385.0L898.9 384.5L899.9 387.4L901.0 390.0L902.0 393.8L903.1 398.5L904.1 400.5L905.1 401.2L906.0 402.5L907.0 401.4L907.9 402.7L908.7 404.7L909.6 406.1L910.6 407.0L912.0 408.0L912.8 407.6L913.8 408.0L914.8 406.8L915.8 405.9L917.0 404.3L918.1 404.9L919.3 404.6L920.4 403.7L921.5 404.3L922.6 403.4L923.6 404.7L924.6 402.6L925.8 400.8L926.9 398.2L928.1 395.6L929.1 393.8L930.2 392.6L931.2 392.0L932.1 392.7L933.0 392.5L933.8 392.3L935.1 392.4L936.0 393.0L936.9 392.8L937.8 392.5L939.0 389.9L939.9 387.7L940.8 382.7L941.8 377.9L942.9 373.2L944.0 369.7L945.0 367.5L946.0 365.6L947.0 365.6L948.1 368.4L949.1 371.4L950.1 374.2L951.1 378.9L952.0 382.5L953.0 389.1L954.0 393.7L955.0 396.8L955.9 398.1L956.8 401.2L957.7 403.1L958.7 404.2L959.8 404.8L961.0 403.5L961.9 402.1L962.8 401.7L963.9 399.4L964.9 397.2L966.0 396.5L967.1 394.3L968.2 392.8L969.3 392.0L970.3 392.0L971.2 391.9L972.0 392.8L973.4 392.7L974.5 395.3L975.5 398.6L976.5 400.5L977.6 400.4L978.6 397.8L979.7 393.7L980.8 387.7L981.9 381.6L983.0 376.5L984.1 372.9L985.0 371.3L986.1 374.0L986.9 380.4L987.7 388.0L988.7 394.7L990.0 396.2L990.8 395.1L991.7 391.9L992.7 388.7L993.7 385.6L994.8 382.5L995.9 378.5L997.0 375.7L998.1 370.7L999.1 366.5L1000.1 362.4L1001.0 359.9L1002.2 362.6L1003.2 369.0L1004.2 375.1L1005.1 381.8L1006.1 387.1L1007.3 392.4L1008.7 395.5L1009.5 396.8L1010.4 397.5L1011.4 398.4L1012.3 399.3L1013.4 399.0L1014.4 401.0L1015.5 404.7L1016.6 406.7L1017.7 408.2L1018.8 408.2L1019.9 408.5L1021.0 408.9L1022.0 407.7L1023.0 406.4L1024.1 406.1L1025.1 405.7L1026.2 405.1L1027.2 403.9L1028.3 402.2L1029.3 401.3L1030.3 399.3L1031.4 398.8L1032.3 397.6L1033.3 396.2L1034.2 395.0L1035.1 394.2L1036.0 394.5L1037.2 391.7L1038.3 386.9L1039.3 379.7L1040.4 372.4L1041.3 364.5L1042.3 358.3L1043.2 354.2L1044.1 350.6L1045.0 348.3L1046.2 349.1L1047.3 353.6L1048.4 359.9L1049.4 367.0L1050.5 373.9L1051.5 381.5L1052.6 385.5L1053.7 388.1L1054.7 391.1L1055.8 394.4L1056.9 395.8L1057.9 396.2L1059.0 393.5L1060.0 393.7L1061.0 391.9L1062.0 387.4L1063.0 383.1L1064.0 375.7L1065.0 370.2L1066.0 365.6L1067.0 364.1L1068.0 367.6L1069.1 373.2L1070.2 380.3L1071.3 388.6L1072.4 393.9L1073.4 398.0L1074.5 399.4L1075.6 398.3L1076.6 397.0L1077.6 394.0L1078.7 391.4L1079.7 389.6L1080.8 388.4L1081.8 388.2L1082.8 388.7L1083.9 389.3L1084.9 389.2L1086.0 389.7L1087.0 390.4L1088.0 391.3L1089.0 393.1L1090.1 396.1L1091.2 399.7L1092.2 404.5L1093.3 406.3L1094.4 406.9L1095.5 407.0L1096.5 406.1L1097.5 404.4L1098.6 401.1L1099.6 398.0L1100.7 395.6L1101.8 394.6L1102.8 394.4L1103.8 395.5L1104.9 398.0L1105.9 398.5L1106.9 398.5L1107.9 398.5L1109.0 398.2L1110.0 399.6L1111.0 400.7L1112.0 400.2L1113.1 399.3L1114.1 399.3L1115.1 398.7L1116.2 397.0L1117.4 394.1L1118.4 390.5L1119.4 386.3L1120.5 382.9L1121.6 377.2L1122.7 372.3L1123.7 368.3L1124.8 366.6L1125.7 364.9L1126.6 363.3L1127.9 363.0L1129.0 365.4L1130.0 369.6L1131.0 378.4L1132.0 385.6L1133.1 392.5L1134.2 399.3L1135.3 403.0L1136.4 406.7L1137.5 407.8L1138.5 407.0L1139.4 406.1L1140.4 404.8L1141.5 402.9L1143.0 401.2L1143.8 399.5L1144.7 397.5L1145.7 397.4L1146.7 395.8L1147.7 394.9L1148.8 395.3L1149.9 395.3L1151.0 395.4L1152.0 395.7L1153.1 395.1L1154.0 395.8L1155.1 397.0L1156.2 398.2L1157.3 398.3L1158.3 398.9L1159.3 400.5L1160.3 400.9L1161.3 399.7L1162.2 399.3L1163.0 397.6L1164.3 401.2L1165.3 404.9L1166.3 408.0L1167.3 409.2L1168.6 409.9L1169.5 409.6L1170.4 408.4L1171.4 406.5L1172.4 404.6L1173.5 401.6L1174.6 398.1L1175.7 395.9L1176.8 394.4L1177.8 395.1L1178.8 395.8L1179.8 396.3L1180.9 394.0L1181.9 392.7L1182.9 391.0L1183.9 389.1L1185.0 389.8L1186.0 389.8L1187.0 389.1L1188.0 391.0L1189.0 390.4L1190.1 390.1L1191.1 388.8L1192.1 389.0L1193.1 385.8L1194.1 385.6L1195.1 384.8L1196.0 385.4L1197.1 387.5L1198.1 389.4L1199.0 391.2L1199.9 394.5L1201.0 397.0L1202.1 398.8L1203.4 399.6L1204.3 399.1L1205.2 400.4L1206.3 401.2L1207.3 401.9L1208.5 403.2L1209.6 402.3L1210.7 401.1L1211.9 401.0L1213.0 400.0L1214.0 401.3L1215.1 402.2L1216.0 404.4L1217.1 404.5L1218.2 404.2L1219.2 402.4L1220.1 402.9L1221.1 403.0L1222.0 402.3L1222.9 401.9L1223.9 401.6L1225.0 401.0L1225.9 401.1L1226.9 400.8L1227.9 401.6L1229.0 403.3L1230.1 402.6L1231.1 399.9L1232.2 398.2L1233.2 397.4L1234.2 396.4L1235.1 394.5L1236.0 392.9L1237.3 392.2L1238.4 394.5L1239.4 395.9L1240.4 398.4L1241.4 400.0L1242.5 401.0L1243.6 400.9L1244.6 401.0L1245.5 399.4L1246.5 399.2L1247.6 397.8L1248.6 396.8L1249.7 395.2L1250.7 394.7L1251.8 392.6L1252.8 392.3L1253.8 390.8L1254.7 390.7L1255.7 389.9L1256.6 390.5L1257.5 390.2L1258.5 391.6L1259.6 391.4L1260.7 391.6L1262.0 391.4L1262.9 392.3L1263.8 392.6L1264.9 393.2L1265.9 394.7L1267.0 396.5L1268.1 399.4L1269.2 401.4L1270.4 403.9L1271.5 405.0L1272.6 405.7L1273.6 406.5L1274.7 406.1L1275.6 404.1L1276.5 402.4L1277.8 400.7L1278.9 396.5L1280.0 393.7L1281.1 388.5L1282.0 384.4L1283.0 380.7L1283.9 375.7L1284.8 370.5L1285.7 368.3L1286.8 367.7L1287.9 369.2L1289.0 372.1L1290.0 376.0L1291.0 379.1L1292.0 383.1L1293.0 385.0L1294.0 385.8L1294.9 385.1L1295.9 383.4L1296.8 380.8L1297.8 379.1L1298.9 376.3L1300.0 375.1L1301.0 374.7L1302.0 375.6L1303.1 376.2L1304.3 379.2L1305.4 382.7L1306.5 385.6L1307.6 389.3L1308.6 390.5L1309.5 390.2L1310.9 388.2L1312.0 383.6L1313.0 381.6L1314.0 379.4L1315.0 379.5L1315.9 381.3L1316.7 383.5L1317.6 387.4L1318.6 390.4L1320.0 391.4L1320.8 392.1L1321.7 392.2L1322.8 391.4L1323.9 390.4L1325.0 387.2L1326.2 384.6L1327.3 382.0L1328.4 378.5L1329.4 378.1L1330.3 378.3L1331.0 379.1L1332.7 380.9L1333.6 381.7L1334.7 377.3L1335.7 368.9L1336.8 356.1L1338.0 342.7L1339.1 331.2L1340.0 321.5L1341.6 304.6L1342.7 299.6L1343.7 315.9L1344.5 340.0L1345.0 359.9L1345.5 380.0L1346.2 403.1L1347.0 422.3L1348.1 431.5L1349.4 431.7L1350.6 416.3L1351.7 402.0L1352.8 410.1L1354.0 420.8L1355.2 415.3L1356.4 411.3L1357.4 425.3L1358.3 442.7L1359.4 453.3L1360.3 460.0" stroke="#3c8a3c"/>
<path d="M83.0 347.6L83.7 338.2L84.7 327.1L86.0 328.5L86.9 326.5L87.9 314.5L89.1 330.6L90.2 336.7L91.5 336.3L92.5 342.4L93.5 323.6L94.6 318.6L95.7 310.6L96.8 302.4L97.9 301.7L98.8 287.7L100.0 295.9L101.0 302.8L102.0 311.8L102.9 315.7L104.0 328.7L105.0 330.0L106.0 333.1L107.0 335.8L108.0 340.0L109.0 343.2L110.0 345.4L111.0 345.1L111.9 343.7L112.9 333.1L113.8 329.1L115.0 325.7L116.0 324.8L117.1 333.9L118.3 344.3L119.5 349.0L120.7 351.1L121.7 350.9L122.6 352.4L124.0 344.6L124.9 332.1L126.0 321.7L127.0 318.7L128.1 320.0L129.3 321.0L130.5 303.6L131.7 307.6L132.8 312.5L133.8 320.0L134.9 330.0L135.9 339.5L137.0 343.4L138.1 331.4L139.3 341.3L140.4 324.8L141.6 317.9L142.7 318.1L143.8 322.3L144.8 329.0L145.9 329.7L146.9 332.3L148.0 323.9L149.1 332.3L150.2 328.3L151.3 325.2L152.5 318.3L153.7 311.0L154.7 320.5L155.7 325.1L156.8 328.9L157.9 344.8L159.0 333.8L160.0 331.2L161.0 327.3L162.2 319.7L163.3 311.6L164.4 308.7L165.4 298.0L166.5 302.5L167.6 292.8L168.7 292.7L169.8 292.5L170.9 292.6L172.0 297.7L173.1 302.6L174.1 305.7L175.2 307.2L176.3 307.2L177.5 308.3L178.5 307.2L179.6 304.4L180.8 299.6L182.0 293.0L183.1 288.2L184.0 283.7L184.8 281.0L185.9 251.7L186.6 239.3L187.7 250.7L188.9 253.9L190.0 263.8L190.8 289.8L192.0 315.3L192.8 316.5L193.8 317.6L194.9 325.3L196.1 306.5L197.3 304.7L198.4 300.4L199.4 304.2L200.6 306.8L201.8 321.2L202.9 310.7L203.9 320.8L205.0 326.6L206.1 324.2L207.1 332.6L208.1 321.6L209.1 320.2L210.0 322.8L211.0 327.4L212.0 326.5L212.9 316.9L214.0 325.0L215.0 325.1L216.1 320.7L217.2 318.0L218.4 313.1L219.5 312.5L220.6 314.0L221.6 320.8L222.7 323.6L223.8 326.0L225.0 321.3L225.9 318.9L227.0 318.5L228.1 316.9L229.1 309.9L230.2 297.0L231.1 307.8L232.0 302.2L233.1 298.9L234.0 293.1L234.9 294.8L236.0 294.5L236.8 300.5L237.8 304.1L238.8 310.7L239.8 315.4L240.9 316.7L241.9 318.2L243.0 316.1L244.1 302.7L245.1 315.0L246.2 315.6L247.3 311.8L248.4 308.3L249.5 314.4L250.6 303.3L251.7 307.1L252.8 311.0L254.0 314.7L255.1 320.1L256.2 325.1L257.1 325.3L258.0 323.9L259.2 310.1L260.0 297.1L261.6 285.7L262.3 283.3L263.2 281.8L264.2 277.7L265.2 273.2L266.3 267.3L267.4 281.2L268.6 274.4L269.7 270.9L270.7 269.1L271.7 266.9L272.6 268.0L273.9 266.9L275.0 263.1L276.1 261.8L277.2 255.5L278.2 260.9L279.1 246.8L280.0 242.4L281.2 239.6L282.2 238.4L283.2 236.0L284.1 230.3L285.0 229.9L286.4 226.8L287.6 227.8L288.8 235.3L289.7 236.7L290.5 241.3L292.0 250.3L292.8 264.8L293.7 253.0L294.8 247.3L295.9 245.5L297.1 244.4L298.2 247.6L299.4 249.1L300.5 248.4L301.5 245.5L302.6 243.0L303.7 232.8L304.7 254.1L305.6 249.2L306.7 243.6L307.8 255.7L309.0 253.2L309.9 260.6L310.8 253.8L311.7 249.3L312.7 254.9L313.7 261.7L314.7 261.6L315.7 260.8L316.8 256.4L317.9 252.5L318.9 254.0L320.0 258.8L321.0 261.2L322.0 263.4L323.1 264.2L324.2 264.2L325.3 270.5L326.4 262.3L327.5 275.6L328.6 273.9L329.7 274.0L330.7 273.8L331.7 277.7L332.6 277.7L333.8 278.3L334.8 277.0L335.9 274.0L336.8 269.2L337.8 275.0L338.7 286.8L339.7 267.6L340.7 258.3L341.8 256.1L342.8 250.7L343.9 251.4L345.0 250.4L346.1 237.4L347.2 246.2L348.4 243.3L349.5 239.2L350.6 237.6L351.7 238.3L352.7 235.5L353.8 236.7L354.9 238.1L356.0 238.9L357.1 235.5L358.1 230.3L359.1 232.9L360.1 239.2L361.1 241.2L362.0 243.7L363.1 235.0L364.0 243.4L364.8 236.6L365.7 255.7L366.6 257.0L367.7 257.2L369.0 260.4L369.8 264.5L370.7 262.0L371.6 262.6L372.5 264.5L373.5 266.7L374.5 264.9L375.5 263.0L376.6 264.3L377.7 260.1L378.8 262.6L379.9 266.8L380.9 266.2L382.0 262.4L383.0 259.9L384.1 254.0L385.2 253.9L386.3 255.0L387.4 255.4L388.5 256.8L389.6 251.3L390.8 246.1L391.9 243.1L392.9 240.6L393.9 236.1L394.9 236.0L395.8 245.7L396.6 231.8L398.0 231.1L399.3 237.2L400.3 227.9L401.2 228.7L402.1 226.8L403.0 228.0L404.0 229.8L405.0 231.4L406.0 233.8L407.0 233.9L408.0 234.9L409.0 239.6L410.0 248.1L411.0 258.3L412.0 263.3L413.1 268.9L414.1 275.3L415.1 283.7L416.2 291.9L417.3 290.1L418.5 297.1L419.4 296.6L420.4 293.8L421.4 296.5L422.4 289.9L423.5 288.7L424.5 284.4L425.5 282.5L426.6 283.7L427.6 283.5L428.6 276.3L429.6 275.5L430.7 281.9L431.7 289.5L432.7 286.4L433.7 293.2L434.8 284.9L435.8 285.1L436.8 285.2L437.8 289.0L438.9 274.7L439.9 274.9L441.0 269.2L442.1 264.7L443.1 259.2L444.1 252.4L445.1 247.5L446.0 240.7L447.1 242.1L448.1 244.3L449.0 242.7L450.0 261.0L450.9 265.1L451.9 268.9L453.0 274.8L453.9 279.6L454.9 279.7L456.0 280.7L457.0 285.9L458.1 289.1L459.1 290.0L460.2 291.4L461.1 293.2L462.0 291.6L463.1 287.9L464.1 280.7L465.0 275.3L465.9 255.6L466.9 255.5L468.0 248.1L468.9 241.2L469.8 235.3L470.7 239.0L471.7 243.5L472.7 247.3L473.7 252.6L474.8 259.9L475.9 264.3L477.0 273.3L477.9 261.6L478.9 265.5L480.0 264.8L481.0 263.1L482.1 261.2L483.2 261.3L484.2 259.0L485.2 255.5L486.2 251.8L487.1 248.9L488.0 246.3L489.2 243.8L490.3 233.6L491.2 236.7L492.2 225.8L493.1 230.5L494.0 225.6L495.0 224.7L496.1 226.1L497.1 235.1L498.2 244.2L499.3 247.4L500.4 250.3L501.5 257.1L502.6 261.5L503.7 266.0L504.7 268.3L505.8 273.7L506.8 278.9L507.8 284.4L508.9 285.8L509.9 287.5L510.9 289.8L511.8 284.0L512.8 278.4L513.7 277.3L514.7 275.0L515.8 275.0L517.0 276.3L517.9 272.2L518.8 267.2L519.8 263.3L520.8 259.0L521.8 264.6L522.9 270.6L524.0 268.0L525.0 261.9L526.1 261.3L527.1 260.4L528.0 262.1L529.1 263.9L530.2 264.2L531.2 266.2L532.2 264.3L533.2 261.1L534.1 264.8L535.1 265.5L536.1 267.3L537.0 273.1L538.1 265.0L539.2 258.5L540.3 259.2L541.4 245.7L542.5 239.6L543.4 251.5L544.3 254.6L545.0 254.1L546.0 255.2L547.0 252.8L547.8 251.6L548.8 251.8L550.0 245.0L551.2 243.7L552.4 235.5L553.6 230.3L554.6 224.4L555.8 234.7L557.0 241.2L558.1 245.4L559.1 242.9L560.0 242.9L561.4 247.0L562.7 265.4L563.8 277.7L564.9 287.5L566.0 287.9L566.8 304.4L567.6 297.8L569.0 284.2L569.8 280.5L570.8 278.9L571.9 275.5L573.0 271.8L574.2 272.9L575.4 270.3L576.5 270.9L577.6 268.9L578.7 266.0L579.7 260.0L580.8 257.5L581.9 256.5L583.0 258.3L584.0 264.0L585.1 250.0L586.1 255.1L587.2 258.9L588.3 262.7L589.2 268.6L590.2 278.6L591.0 279.3L592.4 287.8L593.4 292.8L594.8 295.1L595.6 292.7L596.5 286.2L597.4 285.7L598.5 284.1L599.6 277.6L600.7 262.0L602.0 266.0L602.9 262.2L603.8 265.4L604.8 268.9L605.8 267.8L606.9 265.9L607.9 264.8L609.0 263.7L610.0 263.9L611.1 262.7L612.1 264.0L613.0 264.9L614.1 268.7L615.2 272.5L616.2 272.0L617.2 269.6L618.2 263.5L619.2 249.5L620.1 260.4L621.1 265.9L622.0 264.2L623.2 264.5L624.4 263.7L625.5 274.7L626.6 264.7L627.7 266.3L628.7 268.0L629.5 266.9L630.9 279.0L631.8 295.2L633.0 287.6L633.9 287.2L634.9 288.2L635.9 288.2L637.2 288.6L638.7 275.6L639.6 272.6L640.6 269.2L641.7 257.1L642.9 270.0L644.0 274.6L645.2 257.5L646.4 253.3L647.6 260.4L648.6 256.4L649.6 257.6L650.8 263.7L651.9 268.3L652.9 275.5L653.9 279.7L654.9 277.1L655.9 275.1L657.0 276.4L657.9 274.5L658.9 272.4L659.9 272.8L660.9 265.6L661.9 260.6L662.9 259.3L664.0 250.8L665.0 256.0L666.0 252.9L667.0 251.4L668.0 252.6L669.0 261.5L670.0 268.2L671.0 275.8L672.0 283.9L673.0 281.6L674.0 284.7L675.0 287.2L676.0 286.4L677.1 283.0L678.1 280.6L679.2 280.8L680.2 283.0L681.2 276.6L682.2 273.3L683.1 270.2L684.0 265.2L685.1 268.8L686.0 272.6L686.9 279.1L687.8 283.8L688.8 291.0L690.0 292.6L690.9 291.9L691.8 288.6L692.9 283.7L694.0 278.4L695.1 275.6L696.2 259.3L697.4 265.5L698.6 260.8L699.7 258.1L700.8 259.5L701.8 268.8L702.8 259.2L703.8 261.1L704.8 259.7L705.8 258.3L706.8 260.9L707.8 257.8L708.8 256.1L709.8 256.3L710.8 255.6L711.8 263.1L712.9 266.0L713.9 265.2L715.0 266.2L716.0 259.3L717.0 271.1L718.1 276.5L719.2 280.4L720.3 266.8L721.5 274.4L722.7 275.9L723.6 277.9L724.6 282.4L725.7 272.9L726.7 273.3L727.8 276.1L728.9 277.2L730.0 278.5L731.2 275.9L732.2 272.0L733.3 274.3L734.3 273.0L735.3 275.6L736.2 279.2L737.0 277.9L738.4 273.0L739.5 275.5L740.4 276.6L741.3 282.0L742.2 287.3L743.3 288.1L744.7 286.4L745.5 284.5L746.4 281.5L747.3 280.8L748.3 279.3L749.3 277.8L750.3 277.5L751.4 275.7L752.5 283.0L753.6 276.6L754.7 279.7L755.8 272.2L756.9 269.1L757.9 267.3L759.0 267.6L760.0 264.5L761.0 262.9L762.0 267.8L763.1 268.0L764.1 274.6L765.1 277.3L766.2 278.5L767.2 283.2L768.3 280.7L769.3 280.3L770.3 283.8L771.2 288.6L772.2 287.0L773.1 287.5L774.0 284.2L775.2 270.9L776.2 283.3L777.3 286.1L778.3 278.3L779.3 272.2L780.2 273.2L781.2 271.9L782.1 270.4L783.1 267.6L784.0 263.7L785.0 259.9L786.0 252.5L787.0 260.3L788.0 255.3L789.0 256.9L790.0 255.3L791.0 251.8L792.0 251.4L793.0 252.1L794.0 251.5L795.0 252.0L796.0 263.0L797.1 261.3L798.1 259.0L799.2 258.1L800.2 260.6L801.3 259.0L802.3 264.5L803.4 270.1L804.5 271.2L805.6 275.4L806.8 276.6L807.7 276.7L808.7 278.7L809.8 282.6L810.8 279.8L811.9 274.6L812.9 277.4L814.0 279.5L815.1 278.5L816.1 272.8L817.2 273.9L818.1 264.3L819.1 268.0L820.0 270.9L821.2 273.2L822.4 274.0L823.5 274.1L824.6 273.8L825.7 275.6L826.7 278.7L827.7 278.5L828.6 277.2L829.6 267.4L830.8 268.4L831.8 269.1L832.8 270.4L833.8 269.9L834.8 268.1L835.9 261.7L837.0 262.6L837.9 258.1L838.9 259.6L840.0 266.3L841.0 276.6L842.0 290.8L843.1 280.6L844.1 281.4L845.1 295.1L846.0 293.9L847.1 290.5L848.1 285.0L849.0 279.3L849.9 272.0L850.9 265.4L851.9 263.9L853.0 262.5L854.0 259.3L855.0 261.1L856.1 263.9L857.2 264.7L858.3 267.5L859.4 275.8L860.5 255.2L861.5 266.3L862.5 268.3L863.7 277.9L864.8 273.1L865.9 267.4L866.9 270.6L868.0 272.5L869.0 267.6L870.0 263.8L871.0 270.1L872.1 276.8L873.1 277.6L874.1 278.1L875.1 279.7L876.1 284.6L877.0 281.8L878.2 277.9L879.4 271.7L880.4 264.6L881.5 265.2L882.6 267.5L883.7 266.6L884.8 266.2L885.8 272.1L886.9 277.3L888.0 273.8L889.1 265.6L890.2 263.3L891.4 263.9L892.5 249.1L893.6 260.4L894.6 262.1L895.6 265.9L896.6 282.7L897.7 277.6L899.0 281.8L899.9 285.2L900.8 285.7L901.9 281.7L902.9 281.2L904.0 282.4L905.1 278.0L906.2 273.0L907.1 272.1L908.0 284.7L909.3 274.1L910.4 274.3L911.5 269.1L912.5 262.0L913.7 268.8L914.6 271.0L915.6 269.9L916.5 263.7L917.5 272.8L918.6 273.0L919.7 275.6L921.0 276.2L921.9 281.4L922.8 275.6L923.8 279.4L924.8 271.9L925.9 271.8L926.9 269.9L928.0 270.2L929.0 274.3L930.1 269.5L931.1 262.7L932.0 263.4L933.1 265.0L934.2 267.4L935.3 271.6L936.3 266.3L937.3 264.3L938.3 264.5L939.3 266.9L940.2 259.9L941.0 284.1L942.3 272.4L943.3 274.3L944.3 276.7L945.3 289.1L946.6 276.6L947.5 276.1L948.4 279.2L949.4 283.6L950.4 281.1L951.4 276.6L952.5 270.8L953.6 260.8L954.7 269.9L955.7 263.1L956.7 270.7L957.7 275.2L958.7 273.2L959.6 265.2L960.6 258.9L961.6 267.9L962.7 267.2L963.8 267.8L965.0 277.9L966.0 278.5L967.0 269.8L968.1 271.3L969.2 268.6L970.4 268.3L971.5 265.8L972.7 264.2L973.8 251.3L974.9 246.4L975.9 245.6L976.8 247.0L977.6 245.0L979.1 256.9L980.0 259.1L980.8 263.8L981.7 259.6L983.0 273.7L983.8 270.2L984.7 266.3L985.7 266.4L986.8 266.6L987.8 267.5L989.0 266.5L990.1 267.1L991.1 269.2L992.2 267.1L993.1 272.0L994.0 258.5L995.2 267.0L996.1 272.7L997.0 276.3L997.8 277.7L998.7 278.6L999.7 271.4L1001.0 286.5L1001.8 281.6L1002.7 279.1L1003.7 280.3L1004.7 281.4L1005.8 276.3L1006.9 268.7L1008.0 278.2L1009.1 266.9L1010.2 263.0L1011.3 259.9L1012.2 261.0L1013.2 258.4L1014.0 258.1L1015.3 258.4L1016.5 257.1L1017.5 254.8L1018.5 257.3L1019.4 260.8L1020.4 263.4L1021.5 282.4L1022.5 269.2L1023.4 268.7L1024.5 279.6L1025.5 268.6L1026.6 265.5L1027.6 268.7L1028.7 270.5L1029.7 274.7L1030.6 272.8L1031.7 274.8L1032.8 275.7L1033.9 276.0L1034.9 273.9L1036.0 270.2L1037.0 271.8L1038.0 276.4L1039.0 277.1L1040.0 279.9L1041.0 283.4L1042.0 288.4L1043.0 290.7L1044.0 283.6L1045.0 294.0L1046.1 287.9L1047.1 289.8L1048.2 280.9L1049.3 280.7L1050.4 274.1L1051.5 274.6L1052.6 271.6L1053.6 270.1L1054.6 266.0L1055.6 258.0L1056.6 258.9L1057.6 258.4L1058.8 269.0L1060.0 262.8L1060.9 268.7L1061.8 268.0L1062.8 271.2L1063.9 268.3L1065.0 268.1L1066.1 270.1L1067.1 260.1L1068.2 278.3L1069.2 284.0L1070.1 286.1L1071.0 290.0L1072.2 282.9L1073.3 273.5L1074.3 278.1L1075.2 276.7L1076.1 272.8L1077.0 269.8L1078.0 268.0L1079.0 268.1L1080.0 264.1L1081.1 259.1L1082.1 255.7L1083.2 255.7L1084.3 259.1L1085.5 251.1L1086.5 254.1L1087.5 259.2L1088.6 260.4L1089.7 261.3L1090.8 261.8L1091.9 261.3L1093.0 264.4L1094.0 272.8L1095.0 269.2L1096.2 276.2L1097.4 277.4L1098.6 276.1L1099.7 280.9L1100.8 285.1L1101.8 286.6L1102.8 286.8L1103.9 283.8L1104.9 280.5L1105.7 273.7L1106.7 253.7L1108.0 261.9L1108.9 261.8L1109.8 266.4L1110.9 271.1L1112.0 270.9L1113.1 268.9L1114.3 276.5L1115.4 267.9L1116.4 269.4L1117.4 269.2L1118.5 270.2L1119.6 267.4L1120.6 264.4L1121.5 262.4L1122.5 254.4L1123.6 251.8L1124.7 255.2L1125.6 258.6L1126.6 257.7L1127.7 249.1L1128.7 262.8L1129.8 266.5L1130.8 271.5L1131.9 276.1L1133.0 278.7L1134.0 279.3L1135.0 279.8L1136.0 279.3L1136.9 275.2L1137.9 269.9L1138.9 258.1L1139.9 266.7L1140.9 269.0L1141.9 271.7L1143.0 272.2L1143.9 271.9L1144.9 277.0L1145.8 270.8L1146.8 269.6L1147.8 271.3L1148.8 270.1L1149.8 271.4L1150.8 262.1L1151.9 263.6L1152.9 277.4L1154.0 278.7L1155.0 276.9L1156.0 277.0L1157.1 275.3L1158.2 274.0L1159.3 278.9L1160.4 283.3L1161.5 280.0L1162.6 276.0L1163.7 277.5L1164.8 279.0L1165.8 273.5L1166.8 283.0L1167.9 281.8L1168.9 282.3L1170.0 280.6L1171.0 283.1L1172.0 279.3L1173.0 285.6L1174.0 272.0L1175.0 269.0L1175.9 266.8L1176.9 267.6L1177.8 265.4L1178.9 264.2L1180.0 268.1L1181.1 276.4L1182.1 271.0L1183.2 271.1L1184.2 272.2L1185.1 273.0L1186.1 278.5L1187.0 283.0L1188.1 282.1L1189.1 282.2L1190.1 280.2L1191.1 276.1L1192.0 278.9L1193.0 280.8L1194.0 276.0L1195.0 256.5L1196.1 270.2L1197.1 274.0L1198.1 270.5L1199.2 266.5L1200.3 272.6L1201.5 265.1L1202.4 266.4L1203.4 270.1L1204.4 268.3L1205.5 266.7L1206.5 267.9L1207.6 268.6L1208.6 260.3L1209.7 258.3L1210.7 271.9L1211.7 274.6L1212.7 277.2L1213.7 275.6L1214.7 275.3L1215.8 272.6L1216.8 266.8L1217.8 261.6L1218.9 264.4L1220.0 276.2L1221.0 265.7L1222.1 263.4L1223.2 259.5L1224.3 257.3L1225.4 250.8L1226.5 260.2L1227.6 262.0L1228.7 262.7L1229.8 265.3L1230.8 268.2L1231.9 271.5L1232.9 274.6L1233.9 275.8L1234.9 280.1L1235.9 280.3L1236.9 279.8L1237.9 283.4L1238.9 284.6L1240.0 284.0L1240.9 285.0L1241.9 281.2L1242.9 275.1L1243.9 275.9L1244.9 272.9L1245.9 270.0L1246.9 269.0L1248.0 260.1L1249.0 258.8L1250.0 259.0L1251.0 260.2L1252.0 257.4L1253.1 257.4L1254.1 255.9L1255.2 257.4L1256.2 260.2L1257.3 269.8L1258.3 263.9L1259.3 266.2L1260.2 263.4L1261.2 261.6L1262.0 259.8L1263.2 257.6L1264.2 261.2L1265.1 264.0L1265.9 260.1L1266.8 274.8L1267.8 275.7L1269.0 274.3L1269.9 275.3L1270.8 272.3L1271.8 269.0L1272.9 267.1L1273.9 262.0L1275.0 263.9L1276.1 263.3L1277.1 268.5L1278.2 257.9L1279.1 252.1L1280.0 250.7L1281.3 250.3L1282.4 256.5L1283.5 263.9L1284.5 264.8L1285.5 263.8L1286.5 268.5L1287.5 272.4L1288.6 270.0L1289.6 264.4L1290.6 254.1L1291.7 255.1L1292.7 239.4L1293.8 234.7L1294.8 229.2L1295.8 223.6L1296.8 224.2L1297.8 229.4L1298.8 228.8L1299.8 226.2L1300.9 230.6L1302.0 233.1L1303.0 220.4L1304.0 220.6L1305.0 218.6L1306.1 214.3L1307.2 211.2L1308.3 208.9L1309.3 206.4L1310.3 200.3L1311.3 209.5L1312.4 211.6L1313.5 210.8L1314.5 213.4L1315.5 220.6L1316.4 229.2L1317.5 236.0L1318.6 242.0L1319.5 245.0L1320.5 246.2L1321.5 241.1L1322.5 233.9L1323.6 231.0L1324.6 222.8L1325.7 224.1L1326.7 225.9L1327.7 220.0L1328.9 214.3L1330.1 212.2L1331.3 210.9L1332.5 205.8L1333.6 202.1L1334.7 200.0L1335.7 199.0L1336.5 199.0L1337.9 201.4L1338.8 215.2L1339.5 231.2L1340.8 257.0L1342.0 291.3L1342.9 329.0L1343.6 365.5L1344.2 398.5L1344.7 423.6L1345.4 437.2L1346.2 442.3L1347.0 441.0L1347.8 433.9L1348.8 425.0L1350.0 419.1L1351.3 419.0L1352.5 423.5L1353.3 427.8L1354.0 429.6L1354.8 430.4L1355.6 430.2L1356.6 431.1L1357.7 436.9L1358.8 440.9L1359.6 446.8" stroke="#f040f0"/>
</g>
<rect x="270" y="195" width="1065" height="268.5" fill="#d1c2cc" fill-opacity="0.3"/>
<rect x="80" y="195" width="1.2" height="271" fill="#a39aa0"/>
<rect x="81" y="463.5" width="1297" height="2.5" fill="#e8e7e8"/>
<rect x="80" y="465.7" width="1299" height="1.3" fill="#9c8f98"/>
<rect x="1377.5" y="195" width="1.2" height="271" fill="#a39aa0"/>
</svg>

<!-- axis labels left -->
<div class="ax" style="left:24px;top:204px;color:#2f7a2f">54</div>
<div class="ax" style="left:24px;top:289px;color:#2f7a2f">36</div>
<div class="ax" style="left:24px;top:374px;color:#2f7a2f">18</div>
<div class="ax" style="left:29px;top:459px;color:#2f7a2f">0</div>
<div class="ax" style="left:54px;top:209px;color:#f03cf0">400</div>
<div class="ax" style="left:54px;top:271px;color:#f03cf0">300</div>
<div class="ax" style="left:54px;top:334px;color:#f03cf0">200</div>
<div class="ax" style="left:54px;top:396px;color:#f03cf0">100</div>
<div class="ax" style="left:63px;top:459px;color:#f03cf0">0</div>
<!-- right -->
<div class="ax" style="left:1385px;top:207px;color:#6b97c4">1000</div>
<div class="ax" style="left:1385px;top:257px;color:#6b97c4">800</div>
<div class="ax" style="left:1385px;top:308px;color:#6b97c4">600</div>
<div class="ax" style="left:1385px;top:359px;color:#6b97c4">400</div>
<div class="ax" style="left:1385px;top:410px;color:#6b97c4">200</div>
<div class="ax" style="left:1418px;top:193px;color:#f2a82a">100</div>
<div class="ax" style="left:1418px;top:246px;color:#f2a82a">80</div>
<div class="ax" style="left:1418px;top:299px;color:#f2a82a">60</div>
<div class="ax" style="left:1418px;top:352px;color:#f2a82a">40</div>
<div class="ax" style="left:1418px;top:405px;color:#f2a82a">20</div>
<div class="ax" style="left:1418px;top:459px;color:#f2a82a">0</div>
<div class="ax" style="left:1452px;top:229px;color:#e2392e">150</div>
<div class="ax" style="left:1452px;top:306px;color:#e2392e">100</div>
<div class="ax" style="left:1452px;top:382px;color:#e2392e">50</div>
<div class="ax" style="left:1452px;top:459px;color:#e2392e">0</div>
<!-- x axis -->
<div class="ax" style="left:71px;top:473px;font-size:9px;color:#555">0:00:00</div>
<div class="ax" style="left:284px;top:473px;font-size:9px;color:#555">0:10:00</div>
<div class="ax" style="left:497px;top:473px;font-size:9px;color:#555">0:20:00</div>
<div class="ax" style="left:710px;top:473px;font-size:9px;color:#555">0:30:00</div>
<div class="ax" style="left:923px;top:473px;font-size:9px;color:#555">0:40:00</div>
<div class="ax" style="left:1136px;top:473px;font-size:9px;color:#555">0:50:00</div>
<div class="ax" style="left:1349px;top:473px;font-size:9px;color:#555">1:00:00</div>
<svg class="a" style="left:1497px;top:478px" width="9" height="9" viewBox="0 0 9 9"><path d="M1 8 L8 1 M4 8 L8 4 M7 8 L8 7" stroke="#555" stroke-width="1.2"/></svg>

<!-- scrollbar main -->
<div class="a" style="left:1527px;top:125px;width:17px;height:641px;background:#efefef;border-left:1px solid #fff"></div>
<svg class="a" style="left:1531px;top:130px" width="9" height="7" viewBox="0 0 9 7"><path d="M1 6 L4.5 2 L8 6" stroke="#444" stroke-width="1.6" fill="none"/></svg>
<div class="a" style="left:1528px;top:269px;width:15px;height:234px;background:#c9c9c9"></div>

<!-- laps table -->
<div class="a" style="left:12px;top:501px;width:1498px;height:265px;background:#dfdddf"></div>
<div class="a" style="left:724px;top:506px;font-size:12px;font-weight:bold;color:#222">Laps &amp; Splits</div>
<div class="a" style="left:12px;top:523px;width:1480px;height:1px;background:#cfcdce"></div>
<div class="a" style="left:12px;top:524px;width:1480px;height:26px;background:#e0dedf"></div>
<div class="a" style="left:12px;top:550px;width:1480px;height:1px;background:#cfcdce"></div>
<div class="a" style="left:12px;top:551px;width:1481px;height:27px;background:#eeeeee"></div>
<div class="a" style="left:12px;top:578px;width:1481px;height:26px;background:#a6d3f5"></div>
<div class="a" style="left:1493px;top:551px;width:17px;height:215px;background:#efefef;border-left:1px solid #fff"></div>
<svg class="a" style="left:1496px;top:557px" width="10" height="7" viewBox="0 0 10 7"><path d="M1 6 L5 2 L9 6" stroke="#bbb" stroke-width="1.4" fill="none"/></svg>
<div class="th" style="left:19px;top:532px">Lap</div>
<div class="td" style="left:19px;top:558px">Lap #1</div>
<div class="tdb" style="left:19px;top:585px">AdZ</div>
<div class="th" style="left:150px;top:532px">Start</div>
<div class="a" style="left:142px;top:551px;width:1px;height:27px;background:#d6d4d5"></div>
<div class="td" style="left:150px;top:558px">0:00:00</div>
<div class="tdb" style="left:150px;top:585px">0:08:47</div>
<div class="th" style="left:209px;top:532px">End</div>
<div class="a" style="left:201px;top:551px;width:1px;height:27px;background:#d6d4d5"></div>
<div class="td" style="left:209px;top:558px">0:59:54</div>
<div class="tdb" style="left:209px;top:585px">0:58:45</div>
<div class="th" style="left:268px;top:532px">Duration</div>
<div class="a" style="left:260px;top:551px;width:1px;height:27px;background:#d6d4d5"></div>
<div class="td" style="left:268px;top:558px">0:59:54</div>
<div class="tdb" style="left:268px;top:585px">0:49:57</div>
<div class="th" style="left:336px;top:532px">Moving Duration</div>
<div class="a" style="left:329px;top:551px;width:1px;height:27px;background:#d6d4d5"></div>
<div class="td" style="left:336px;top:558px">0:59:54</div>
<div class="tdb" style="left:336px;top:585px">0:49:57</div>
<div class="th" style="left:451px;top:532px">Kilometers</div>
<div class="a" style="left:444px;top:551px;width:1px;height:27px;background:#d6d4d5"></div>
<div class="td" style="left:451px;top:558px">18.0</div>
<div class="tdb" style="left:451px;top:585px">12.4</div>
<div class="th" style="left:533px;top:532px">TSS</div>
<div class="a" style="left:526px;top:551px;width:1px;height:27px;background:#d6d4d5"></div>
<div class="td" style="left:533px;top:558px">92</div>
<div class="tdb" style="left:533px;top:585px">81</div>
<div class="th" style="left:574px;top:532px">IF</div>
<div class="a" style="left:566px;top:551px;width:1px;height:27px;background:#d6d4d5"></div>
<div class="td" style="left:574px;top:558px">0.97</div>
<div class="tdb" style="left:574px;top:585px">0.99</div>
<div class="th" style="left:615px;top:532px">NP</div>
<div class="a" style="left:607px;top:551px;width:1px;height:27px;background:#d6d4d5"></div>
<div class="td" style="left:615px;top:558px">309</div>
<div class="tdb" style="left:615px;top:585px">317</div>
<div class="th" style="left:653px;top:532px">Avg Power</div>
<div class="a" style="left:645px;top:551px;width:1px;height:27px;background:#d6d4d5"></div>
<div class="td" style="left:653px;top:558px">300</div>
<div class="tdb" style="left:653px;top:585px">315</div>
<div class="th" style="left:734px;top:532px">Max Power</div>
<div class="a" style="left:726px;top:551px;width:1px;height:27px;background:#d6d4d5"></div>
<div class="td" style="left:734px;top:558px">467</div>
<div class="tdb" style="left:734px;top:585px">467</div>
<div class="th" style="left:818px;top:532px">Avg Heart Rate</div>
<div class="a" style="left:810px;top:551px;width:1px;height:27px;background:#d6d4d5"></div>
<div class="td" style="left:818px;top:558px">154</div>
<div class="tdb" style="left:818px;top:585px">159</div>
<div class="th" style="left:925px;top:532px">Max Heart Rate</div>
<div class="a" style="left:917px;top:551px;width:1px;height:27px;background:#d6d4d5"></div>
<div class="td" style="left:925px;top:558px">173</div>
<div class="tdb" style="left:925px;top:585px">172</div>
<div class="th" style="left:1035px;top:532px">Avg Speed</div>
<div class="a" style="left:1027px;top:551px;width:1px;height:27px;background:#d6d4d5"></div>
<div class="td" style="left:1035px;top:558px">18.0</div>
<div class="tdb" style="left:1035px;top:585px">14.9</div>
<div class="th" style="left:1115px;top:532px">Max Speed</div>
<div class="a" style="left:1107px;top:551px;width:1px;height:27px;background:#d6d4d5"></div>
<div class="td" style="left:1115px;top:558px">57.1</div>
<div class="tdb" style="left:1115px;top:585px">41.2</div>
<div class="th" style="left:1198px;top:532px">Cad</div>
<div class="a" style="left:1190px;top:551px;width:1px;height:27px;background:#d6d4d5"></div>
<div class="td" style="left:1198px;top:558px">84</div>
<div class="tdb" style="left:1198px;top:585px">85</div>
<div class="th" style="left:1239px;top:532px">Elev Gain</div>
<div class="a" style="left:1231px;top:551px;width:1px;height:27px;background:#d6d4d5"></div>
<div class="td" style="left:1239px;top:558px">0</div>
<div class="tdb" style="left:1239px;top:585px">1036</div>
<div class="th" style="left:1312px;top:532px">Elev Loss</div>
<div class="a" style="left:1304px;top:551px;width:1px;height:27px;background:#d6d4d5"></div>
<div class="td" style="left:1312px;top:558px">0</div>
<div class="tdb" style="left:1312px;top:585px">0</div>
<div class="th" style="left:1386px;top:532px">Work</div>
<div class="a" style="left:1378px;top:551px;width:1px;height:27px;background:#d6d4d5"></div>
<div class="td" style="left:1386px;top:558px">1080</div>
<div class="tdb" style="left:1386px;top:585px">945</div>
<div class="th" style="left:1434px;top:532px">Calories</div>
<div class="a" style="left:1426px;top:551px;width:1px;height:27px;background:#d6d4d5"></div>
<div class="td" style="left:1434px;top:558px">0</div>
<div class="tdb" style="left:1434px;top:585px">945</div>

<!-- right panel -->
<div class="a" style="left:1544px;top:125px;width:318px;height:641px;background:#e2e0e1"></div>
<div class="a" style="left:1544px;top:145px;width:318px;text-align:center;font-size:20px;color:#666">AdZ</div>
<div class="a" style="left:1560px;top:171px;width:302px;height:3px;background:linear-gradient(to right,rgba(195,193,194,0),rgba(195,193,194,.55) 30%,rgba(195,193,194,.55) 60%,rgba(195,193,194,0));filter:blur(0.6px)"></div>
<div class="a" style="left:1590px;top:194px;width:62px;text-align:center;font-size:10px;color:#666">Duration</div>
<div class="a" style="left:1698px;top:194px;width:62px;text-align:center;font-size:10px;color:#666">Distance</div>
<div class="a" style="left:1780px;top:194px;width:62px;text-align:center;font-size:10px;color:#666">TSS</div>
<div class="a" style="left:1571px;top:203px;font-size:25px;color:#383838">49:57.40</div>
<div class="a" style="left:1694px;top:203px;font-size:25px;color:#383838">12.4 <span style="font-size:13.5px">km</span></div>
<div class="a" style="left:1797px;top:203px;font-size:25px;color:#383838">81</div>
<div class="sl" style="left:1553px;top:252px;width:60px">Work</div>
<div class="sv" style="left:1633px;top:250px">945 <span>kJ</span></div>
<div class="sl" style="left:1553px;top:272px;width:60px">NP</div>
<div class="sv" style="left:1633px;top:270px">317 <span>W</span></div>
<div class="sl" style="left:1553px;top:292px;width:60px">Pw:Hr</div>
<div class="sv" style="left:1633px;top:290px">5.76%</div>
<div class="sl" style="left:1553px;top:312px;width:60px">El. Gain</div>
<div class="sv" style="left:1633px;top:310px">1036 <span>m</span></div>
<div class="sl" style="left:1553px;top:332px;width:60px">El. Loss</div>
<div class="sv" style="left:1633px;top:330px">--</div>
<div class="sl" style="left:1553px;top:352px;width:60px">W/kg</div>
<div class="sv" style="left:1633px;top:350px">3.96</div>
<div class="sl" style="left:1716px;top:252px;width:60px">IF</div>
<div class="sv" style="left:1796px;top:250px">0.99</div>
<div class="sl" style="left:1716px;top:272px;width:60px">VI</div>
<div class="sv" style="left:1796px;top:270px">1.01</div>
<div class="sl" style="left:1716px;top:292px;width:60px">EF</div>
<div class="sv" style="left:1796px;top:290px">1.99</div>
<div class="sl" style="left:1716px;top:312px;width:60px">Grade</div>
<div class="sv" style="left:1796px;top:310px">8.3%</div>
<div class="sl" style="left:1716px;top:332px;width:60px">VAM</div>
<div class="sv" style="left:1796px;top:330px">1244 <span>m/h</span></div>
<div class="a" style="left:1623px;top:247px;width:1px;height:120px;background:#cfcdce"></div>
<div class="a" style="left:1786px;top:247px;width:1px;height:100px;background:#cfcdce"></div>
<div class="a" style="left:1555px;top:386px;width:297px;height:1px;background:#cfcdce"></div>
<div class="a" style="left:1626px;top:406px;width:50px;text-align:center;font-size:11px;color:#555">MIN</div>
<div class="a" style="left:1680px;top:406px;width:50px;text-align:center;font-size:11px;color:#555">AVG</div>
<div class="a" style="left:1734px;top:406px;width:50px;text-align:center;font-size:11px;color:#555">MAX</div>
<div class="sl" style="left:1533px;top:433px;width:80px">Power</div>
<div class="mv" style="left:1631px;top:431px">200</div>
<div class="mv" style="left:1685px;top:431px">315</div>
<div class="mv" style="left:1739px;top:431px">467</div>
<div class="sl" style="left:1795px;top:434px;text-align:left">W</div>
<div class="sl" style="left:1533px;top:457px;width:80px">Heart Rate</div>
<div class="mv" style="left:1631px;top:455px">141</div>
<div class="mv" style="left:1685px;top:455px">159</div>
<div class="mv" style="left:1739px;top:455px">172</div>
<div class="sl" style="left:1795px;top:458px;text-align:left">bpm</div>
<div class="sl" style="left:1533px;top:481px;width:80px">Cadence</div>
<div class="mv" style="left:1631px;top:479px">56</div>
<div class="mv" style="left:1685px;top:479px">85</div>
<div class="mv" style="left:1739px;top:479px">103</div>
<div class="sl" style="left:1795px;top:482px;text-align:left">rpm</div>
<div class="sl" style="left:1533px;top:505px;width:80px">Speed</div>
<div class="mv" style="left:1631px;top:503px">8.45</div>
<div class="mv" style="left:1685px;top:503px">14.9</div>
<div class="mv" style="left:1739px;top:503px">41.2</div>
<div class="sl" style="left:1795px;top:506px;text-align:left">kph</div>
<div class="sl" style="left:1533px;top:529px;width:80px">Pace</div>
<div class="mv" style="left:1631px;top:527px">07:06</div>
<div class="mv" style="left:1685px;top:527px">04:01</div>
<div class="mv" style="left:1739px;top:527px">01:27</div>
<div class="sl" style="left:1795px;top:530px;text-align:left">min/km</div>
<div class="sl" style="left:1533px;top:553px;width:80px">Elevation</div>
<div class="mv" style="left:1631px;top:551px">7</div>
<div class="mv" style="left:1685px;top:551px">529</div>
<div class="mv" style="left:1739px;top:551px">1043</div>
<div class="sl" style="left:1795px;top:554px;text-align:left">m</div>
<div class="a" style="left:1623px;top:427px;width:1px;height:139px;background:#cfcdce"></div>
<div class="a" style="left:1786px;top:427px;width:1px;height:139px;background:#cfcdce"></div>
<div class="a" style="left:1544px;top:583px;width:318px;height:1px;background:#cac8c9"></div>
<svg class="a" style="left:1610px;top:590px" width="200" height="40" viewBox="0 0 200 40">
<g fill="none" stroke="#6a6468" stroke-width="1.1">
<rect x="14.5" y="12" width="18" height="19" fill="#fff"/><rect x="17.5" y="11" width="12" height="3" fill="#d8d8d8"/>
<path d="M18 19.5 H29 M18 24.5 H29"/>
</g>
<path d="M62.5 31.5 L53 20 C50.5 16.5 51.5 12 55.5 11.5 C58.5 11.2 61 13 62.5 15.5 C64 13 66.5 11.2 69.5 11.5 C73.5 12 74.5 16.5 72 20Z" fill="none" stroke="#8a8388" stroke-width="1"/>
<circle cx="75" cy="10.7" r="8" fill="#1f5a96"/><text x="75" y="14.6" font-size="11" fill="#fff" text-anchor="middle" font-family="Liberation Sans">6</text>
<path d="M104 12 L94 21 H100 L93.5 31.5 L108.5 17.5 H102 L106 11" fill="none" stroke="#8a8388" stroke-width="1"/>
<circle cx="113.9" cy="10.7" r="8" fill="#1f5a96"/><text x="113.9" y="14.6" font-size="11" fill="#fff" text-anchor="middle" font-family="Liberation Sans">6</text>
<circle cx="140.5" cy="21.5" r="10.2" fill="none" stroke="#8a8388" stroke-width="1"/><path d="M140.5 15 V21.5 H146" fill="none" stroke="#a8a2a6" stroke-width="1.2"/>
<circle cx="179" cy="21.5" r="10.2" fill="none" stroke="#8a8388" stroke-width="1" stroke-dasharray="3 2.4"/>
</svg>
<div class="a" style="left:1544px;top:635px;width:334px;text-align:center;font-size:15px;color:#777">Laps</div>
<div class="a" style="left:1544px;top:692px;width:318px;height:1px;background:#d3d1d2"></div>
<div class="a" style="left:1544px;top:726px;width:318px;height:26px;background:#a6d3f5"></div>
<div class="a" style="left:1554px;top:673px;width:13px;height:13px;border:1.5px solid #222;background:#fff"></div>
<div class="a" style="left:1576px;top:673px;font-size:12px;color:#222">Entire Workout</div>
<div class="a" style="left:1719px;top:671px;font-size:14px;color:#222">59:55</div>
<div class="a" style="left:1554px;top:705px;width:13px;height:13px;border:1.5px solid #222;background:#fff"></div>
<div class="a" style="left:1576px;top:705px;font-size:12px;color:#222">Lap #1</div>
<div class="a" style="left:1719px;top:703px;font-size:14px;color:#222">59:54</div>
<div class="a" style="left:1554px;top:733px;width:13px;height:13px;border:1.5px solid #222;background:#fff"></div>
<svg class="a" style="left:1554px;top:733px" width="13" height="13" viewBox="0 0 13 13"><path d="M2.5 6 L5.5 10 L11 2.5" stroke="#333" stroke-width="1.2" fill="none"/></svg>
<div class="a" style="left:1576px;top:733px;font-size:12px;font-weight:bold;color:#222">AdZ</div>
<div class="a" style="left:1719px;top:731px;font-size:14px;font-weight:bold;color:#222">49:57.40</div>

</body></html>
